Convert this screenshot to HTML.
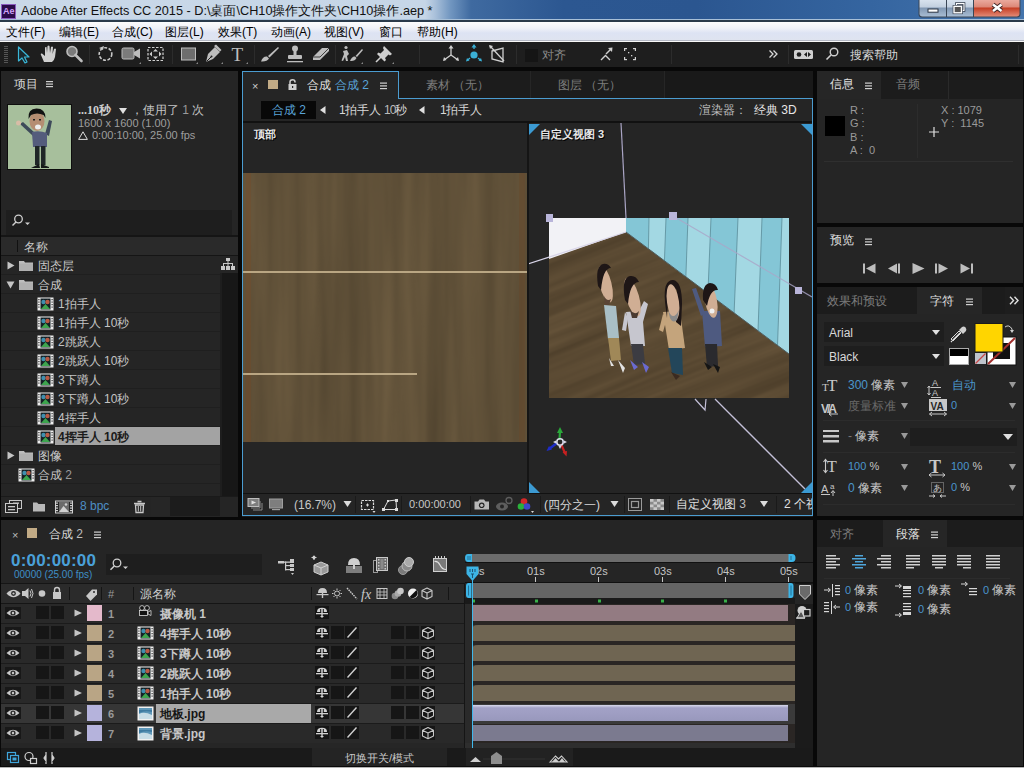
<!DOCTYPE html>
<html><head><meta charset="utf-8">
<style>
*{box-sizing:border-box}
html,body{margin:0;padding:0;width:1024px;height:768px;overflow:hidden;background:#080808;font-family:"Liberation Sans",sans-serif;font-size:12px;color:#c8c8c8}
.a{position:absolute}
.t{position:absolute;white-space:nowrap;line-height:1}
#title{left:0;top:0;width:1024px;height:22px;background:linear-gradient(#00000000 19px,#a8c0d8 19px,#a8c0d8 20px,#2a3a4a 20px),linear-gradient(90deg,#c9d8e8 0%,#c6d6e7 41.5%,#a9c0da 42.5%,#7196c0 44%,#3f6aa0 46%,#2c5791 55%,#2b5690 68%,#3565a0 85%,#4474ac 100%)}
#menu{left:0;top:22px;width:1024px;height:20px;background:linear-gradient(#fcfcfc,#f0f2f8 30%,#dde3f3 55%,#dfe4f0 90%,#b4b8c4 90%,#b4b8c4 95%,#f8f8f8 95%)}
#tool{left:0;top:42px;width:1024px;height:25px;background:#1e1e1e}
.panel{position:absolute;background:#252525}
</style></head><body>
<!-- title bar -->
<div id="title" class="a">
  <div class="a" style="left:1px;top:4px;width:15px;height:15px;background:#2a0c4a;border:1px solid #8a5cc0"></div>
  <div class="t" style="left:3px;top:7px;font-size:9px;color:#d0a4fa;font-weight:bold">Ae</div>
  <div class="t" style="left:21px;top:5px;font-size:12.7px;color:#111">Adobe After Effects CC 2015 - D:\桌面\CH10操作文件夹\CH10操作.aep *</div>
<svg class="a" style="left:917px;top:0" width="105" height="19" viewBox="917 0 105 19">
 <defs>
  <linearGradient id="bg1" x1="0" y1="0" x2="0" y2="1"><stop offset="0" stop-color="#d8e2ee"/><stop offset="0.44" stop-color="#c2cfdf"/><stop offset="0.47" stop-color="#8096b2"/><stop offset="1" stop-color="#a9bdd3"/></linearGradient>
  <linearGradient id="bg2" x1="0" y1="0" x2="0" y2="1"><stop offset="0" stop-color="#eaa99d"/><stop offset="0.44" stop-color="#dc8676"/><stop offset="0.47" stop-color="#c43c22"/><stop offset="1" stop-color="#e28a76"/></linearGradient>
 </defs>
 <path d="M918.5 0 L918.5 14 Q918.5 17.5 922 17.5 L1017 17.5 Q1020.5 17.5 1020.5 14 L1020.5 0 Z" fill="#3a4656"/>
 <path d="M919.5 0 L919.5 13.5 Q919.5 16.5 922.5 16.5 L946 16.5 L946 0Z" fill="url(#bg1)"/>
 <rect x="947" y="0" width="26" height="16.5" fill="url(#bg1)"/>
 <path d="M974 0 L974 16.5 L1016.5 16.5 Q1019.5 16.5 1019.5 13.5 L1019.5 0Z" fill="url(#bg2)"/>
 <rect x="928" y="9" width="10" height="3.2" fill="#fff" stroke="#2a3444" stroke-width="1"/>
 <rect x="956.5" y="3.5" width="7.5" height="7" fill="none" stroke="#2a3444" stroke-width="2.6"/>
 <rect x="956.5" y="3.5" width="7.5" height="7" fill="none" stroke="#fff" stroke-width="1.2"/>
 <rect x="954" y="6.3" width="7.5" height="6.5" fill="#c2cfdf" stroke="#2a3444" stroke-width="2.6"/>
 <rect x="954" y="6.3" width="7.5" height="6.5" fill="#555" stroke="#fff" stroke-width="1.4"/>
 <path d="M993 4.5 L1001.5 11 M1001.5 4.5 L993 11" stroke="#3a2222" stroke-width="4.4"/>
 <path d="M993 4.5 L1001.5 11 M1001.5 4.5 L993 11" stroke="#fff" stroke-width="2.6"/>
</svg>
</div>
<!-- menu bar -->
<div id="menu" class="a">
  <div class="t" style="left:6px;top:4px;color:#000">文件(F)</div>
  <div class="t" style="left:59px;top:4px;color:#000">编辑(E)</div>
  <div class="t" style="left:112px;top:4px;color:#000">合成(C)</div>
  <div class="t" style="left:165px;top:4px;color:#000">图层(L)</div>
  <div class="t" style="left:218px;top:4px;color:#000">效果(T)</div>
  <div class="t" style="left:271px;top:4px;color:#000">动画(A)</div>
  <div class="t" style="left:324px;top:4px;color:#000">视图(V)</div>
  <div class="t" style="left:379px;top:4px;color:#000">窗口</div>
  <div class="t" style="left:417px;top:4px;color:#000">帮助(H)</div>
</div>
<!-- toolbar -->
<div id="tool" class="a">
<svg class="a" style="left:0;top:0" width="1024" height="25" viewBox="0 42 1024 25">
 <g fill="#555"><rect x="4" y="46" width="4" height="1"/><rect x="4" y="48" width="4" height="1"/><rect x="4" y="50" width="4" height="1"/><rect x="4" y="52" width="4" height="1"/><rect x="4" y="54" width="4" height="1"/><rect x="4" y="56" width="4" height="1"/><rect x="4" y="58" width="4" height="1"/><rect x="4" y="60" width="4" height="1"/><rect x="4" y="62" width="4" height="1"/></g>
 <!-- selection arrow -->
 <path d="M18.5 47 L18.5 61 L22 58 L25 63 L27 62 L24.5 57 L29 57 Z" fill="#1a2a30" stroke="#3ab7d8" stroke-width="1.2" stroke-linejoin="round"/>
 <!-- hand -->
 <path d="M44 62 L41 55 Q40 53 42 53.5 L45 56 L45 48 Q45 46.5 46.5 47 L47 53 L47.5 46 Q48.5 45 49.5 46 L50 53 L51 47 Q52 46 53 47 L52.5 54 L54 49 Q55 48 56 49 L55 57 Q54 61 52 62 Z" fill="#cfcfcf"/>
 <!-- zoom -->
 <circle cx="72" cy="51.5" r="5" fill="#7a7a7a" stroke="#bdbdbd" stroke-width="1.6"/>
 <path d="M75.5 55 L81.5 61" stroke="#bdbdbd" stroke-width="2.6" stroke-linecap="round"/>
 <rect x="89" y="45" width="1" height="19" fill="#2c2c2c"/>
 <!-- rotate -->
 <circle cx="105.5" cy="54" r="6.3" fill="none" stroke="#c8c8c8" stroke-width="1.6" stroke-dasharray="3 1.6"/>
 <path d="M99 48 L104 46 L103 50 Z" fill="#c8c8c8"/>
 <!-- camera -->
 <rect x="122" y="48" width="12" height="11" rx="1.5" fill="#7b7b7b" stroke="#bdbdbd" stroke-width="1"/>
 <path d="M134 52 L140 48.5 L140 58.5 L134 55 Z" fill="#bdbdbd"/>
 <path d="M139 64 L141 62 L141 64 Z" fill="#888"/>
 <!-- pan behind -->
 <rect x="148" y="47.5" width="15" height="13" fill="none" stroke="#d0d0d0" stroke-width="1.2" stroke-dasharray="2.5 1.5"/>
 <path d="M155.5 49 L158 51.5 L153 51.5 Z M155.5 59 L158 56.5 L153 56.5 Z M149.5 54 L152 51.5 L152 56.5 Z M161.5 54 L159 51.5 L159 56.5Z" fill="#d0d0d0"/>
 <rect x="172" y="45" width="1" height="19" fill="#2c2c2c"/>
 <!-- rectangle -->
 <rect x="181.5" y="48" width="14" height="12" fill="#6e6e6e" stroke="#bdbdbd" stroke-width="1"/>
 <path d="M196 64 L198 62 L198 64 Z" fill="#888"/>
 <!-- pen -->
 <path d="M206 62 L208 54 L215 47 L220 52 L213 59 Z" fill="#bdbdbd"/>
 <path d="M214 46 L216 44.5 L221.5 50 L220 51.5 Z" fill="#bdbdbd"/>
 <path d="M206.5 61.5 L211 57" stroke="#1e1e1e" stroke-width="1"/>
 <circle cx="211.5" cy="56.5" r="1" fill="#1e1e1e"/>
 <path d="M221 64 L223 62 L223 64 Z" fill="#888"/>
 <!-- T -->
 <text x="231.5" y="61" font-family="Liberation Serif" font-size="19" fill="#bdbdbd">T</text>
 <path d="M246 64 L248 62 L248 64 Z" fill="#888"/>
 <rect x="254" y="45" width="1" height="19" fill="#2c2c2c"/>
 <!-- brush -->
 <path d="M261 61.5 Q263 56 267 56.5 L269 58.5 Q267 62 261 61.5 Z" fill="#bdbdbd"/>
 <path d="M268 56 L278 47 L279 48 L269.5 57.5 Z" fill="#bdbdbd"/>
 <!-- stamp -->
 <circle cx="295" cy="48.5" r="3" fill="#bdbdbd"/>
 <rect x="293.5" y="50" width="3" height="5" fill="#bdbdbd"/>
 <rect x="288" y="55" width="14" height="4" rx="1" fill="#bdbdbd"/>
 <rect x="287" y="61" width="16" height="1.3" fill="#bdbdbd"/>
 <!-- eraser -->
 <path d="M313 57 L322 48 L329 48 L329 51 L320 60 L313 60 Z" fill="#bdbdbd"/>
 <path d="M313 57 L320 57 L329 48" stroke="#1e1e1e" stroke-width="0.8" fill="none"/>
 <rect x="335" y="45" width="1" height="19" fill="#2c2c2c"/>
 <!-- roto brush -->
 <circle cx="346" cy="47.5" r="1.6" fill="#bdbdbd"/>
 <path d="M343 51 L347 50 L349 54 L347 56 L348 61 L346 61 L345 57 L343 61 L341.5 60.5 L344 54 Z" fill="#bdbdbd"/>
 <path d="M350 61 Q352 56 355 56.5 L356.5 58 Q355 61.5 350 61 Z" fill="#bdbdbd"/>
 <path d="M355.5 56 L362 49 L363 50 L357 57 Z" fill="#bdbdbd"/>
 <path d="M361 64 L363 62 L363 64 Z" fill="#888"/>
 <!-- pin -->
 <path d="M384 46 L392 54 L390 55.5 L388.5 54.5 L385 58 L386 60 L384.5 61.5 L377 54 L378.5 52.5 L380.5 53.5 L384 50 L383 48 Z" fill="#cfcfcf"/>
 <path d="M381 57 L376 62" stroke="#cfcfcf" stroke-width="1.6"/>
 <path d="M392 64 L394 62 L394 64 Z" fill="#888"/>
 <rect x="419" y="45" width="1" height="19" fill="#2c2c2c"/>
 <!-- local axis -->
 <g stroke="#d0d0d0" stroke-width="1.3" fill="none"><path d="M451 55 L451 47"/><path d="M451 55 L444 60"/><path d="M451 55 L458 60"/></g>
 <path d="M451 45 L453.5 48.5 L448.5 48.5 Z M443 61 L444 57 L446.5 60 Z M459 61 L455.5 60 L458 57 Z" fill="#d0d0d0"/>
 <!-- world axis cyan -->
 <g stroke="#3ab0d6" stroke-width="1.3" fill="none"><path d="M474 49 L474 45.5"/><path d="M470 58 L467 60.5"/><path d="M478 58 L481 60.5"/></g>
 <circle cx="474" cy="55" r="3.6" fill="#3ab0d6"/>
 <path d="M474 44 L476.5 47.5 L471.5 47.5 Z M466 61.5 L467 58 L469.5 60.5 Z M482 61.5 L478.5 60.5 L481 58 Z" fill="#3ab0d6"/>
 <!-- view axis -->
 <path d="M492 51 L503 48 L503 62 L492 59 Z" fill="none" stroke="#d0d0d0" stroke-width="1.3"/>
 <path d="M490 46 L504 61" stroke="#d0d0d0" stroke-width="1.3"/>
 <path d="M489 45 L493 46 L490 49 Z" fill="#d0d0d0"/>
 <rect x="516" y="45" width="1" height="19" fill="#2c2c2c"/>
 <!-- checkbox -->
 <rect x="525" y="49" width="13" height="13" fill="#151515"/>
 <!-- snap icon -->
 <path d="M601 60 L605.5 55.5 L610 60" stroke="#d0d0d0" stroke-width="1.4" fill="none"/>
 <path d="M606 54 L611 49" stroke="#d0d0d0" stroke-width="1.4"/>
 <path d="M612.5 47.5 L612 52 L608 48 Z" fill="#d0d0d0"/>
 <!-- frame -->
 <g fill="#d0d0d0"><rect x="624" y="48" width="3" height="1.2"/><rect x="624" y="48" width="1.2" height="3"/><rect x="633" y="48" width="3" height="1.2"/><rect x="634.8" y="48" width="1.2" height="3"/><rect x="624" y="59" width="3" height="1.2"/><rect x="624" y="57" width="1.2" height="3"/><rect x="633" y="59" width="3" height="1.2"/><rect x="634.8" y="57" width="1.2" height="3"/><rect x="628" y="52" width="1.3" height="1.3"/><rect x="631" y="55" width="1.3" height="1.3"/></g>
 <rect x="671" y="45" width="1" height="19" fill="#2c2c2c"/>
 <!-- >> -->
 <path d="M769.5 50.5 L773 54 L769.5 57.5 M773.5 50.5 L777 54 L773.5 57.5" stroke="#d8d8d8" stroke-width="1.3" fill="none"/>
 <rect x="788" y="45" width="1" height="19" fill="#2c2c2c"/>
 <!-- workspace icon -->
 <rect x="794" y="50" width="19" height="9" rx="1.5" fill="#d0d0d0"/>
 <circle cx="799" cy="54.5" r="2.3" fill="#1e1e1e"/>
 <path d="M804 54.5 L807 52 L807 57 Z M811 54.5 L808 52 L808 57 Z" fill="#1e1e1e"/>
 <!-- search -->
 <circle cx="834" cy="52" r="3.8" fill="none" stroke="#d0d0d0" stroke-width="1.4"/>
 <path d="M831 55 L826.5 59.5" stroke="#d0d0d0" stroke-width="1.6"/>
 <rect x="1018" y="45" width="1" height="19" fill="#2c2c2c"/>
</svg>
<div class="t" style="left:542px;top:7px;color:#8a8a8a">对齐</div>
<div class="t" style="left:850px;top:7px;color:#d8d8d8;font-size:12px">搜索帮助</div>
</div>

<!-- project panel -->
<div class="panel" style="left:1px;top:71px;width:237px;height:446px"></div>
<div class="t" style="left:14px;top:78px;color:#d4d4d4">项目</div>
<svg class="a" style="left:46px;top:80px" width="8" height="8"><g fill="#cfcfcf"><rect x="0" y="1" width="7" height="1.2"/><rect x="0" y="3.5" width="7" height="1.2"/><rect x="0" y="6" width="7" height="1.2"/></g></svg>
<!-- thumbnail -->
<div class="a" style="left:7px;top:104px;width:65px;height:66px;background:#0e0e0e"></div>
<svg class="a" style="left:8px;top:105px" width="63" height="64" viewBox="0 0 63 64">
 <rect width="63" height="64" fill="#a7bf9c"/>
 <path d="M12 19 L15 17 L27 28 L25 31 Z" fill="#3e4a5a"/>
 <circle cx="10.5" cy="18" r="2.5" fill="#d8bca6"/>
 <path d="M37 29 L41 15 L44 16 L41 31 Z" fill="#3e4a5a"/>
 <path d="M24 27 Q31 25 39 28 L39 42 L25 42 Z" fill="#545c7c"/>
 <rect x="27" y="41" width="4.5" height="19" fill="#1f2627"/><rect x="33" y="41" width="4.5" height="19" fill="#1f2627"/>
 <path d="M23 63 L31 59 L32 63Z M33 59 L41 62 L41 63 L33 63Z" fill="#141818"/>
 <ellipse cx="29" cy="16" rx="7.5" ry="10" fill="#b58d72"/>
 <path d="M20.5 14 Q19.5 3.5 28.5 3.5 Q37.5 3.5 37.5 13 L35.5 10 Q29 7 23 10 Z" fill="#121212"/>
 <ellipse cx="30" cy="22" rx="3" ry="2.5" fill="#eeeeee"/>
 <rect x="25" y="14" width="2" height="1.5" fill="#222"/><rect x="31" y="14" width="2" height="1.5" fill="#222"/>
</svg>
<div class="t" style="left:78px;top:104px;color:#cfcfcf;font-weight:bold;font-family:'Liberation Serif',serif;font-size:12px">...10秒</div>
<svg class="a" style="left:119px;top:108px" width="8" height="6"><path d="M0 0 L8 0 L4 6Z" fill="#e0e0e0"/></svg>
<div class="t" style="left:131px;top:104px;color:#c4c4c4">，使用了 <span style="color:#9a9a9a">1</span> 次</div>
<div class="t" style="left:78px;top:118px;color:#9e9e9e;font-size:11px">1600 x 1600 (1.00)</div>
<svg class="a" style="left:78px;top:131px" width="10" height="9"><path d="M5 0.8 L9.4 8.4 L0.6 8.4Z" fill="none" stroke="#dcdcdc" stroke-width="1"/></svg>
<div class="t" style="left:92px;top:130px;color:#9e9e9e;font-size:11px">0:00:10:00, 25.00 fps</div>
<!-- search -->
<div class="a" style="left:6px;top:210px;width:226px;height:25px;background:#1e1e1e"></div>
<svg class="a" style="left:11px;top:213px" width="22" height="16"><circle cx="7.5" cy="6" r="3.8" fill="none" stroke="#d0d0d0" stroke-width="1.3"/><path d="M5 9 L1.5 12.5" stroke="#d0d0d0" stroke-width="1.5"/><path d="M14 9.5 L19 9.5 L16.5 12 Z" fill="#d0d0d0"/></svg>
<div class="a" style="left:1px;top:235px;width:237px;height:2px;background:#151515"></div>
<!-- header -->
<div class="a" style="left:1px;top:237px;width:237px;height:18px;background:#2a2a2a"></div>
<div class="a" style="left:17px;top:240px;width:1px;height:12px;background:#111"></div>
<div class="t" style="left:24px;top:241px;color:#c8c8c8">名称</div>
<div class="a" style="left:1px;top:255px;width:237px;height:1px;background:#151515"></div>
<div class="a" style="left:1px;top:256px;width:219px;height:19px;border-bottom:1px solid #1f1f1f"></div>
<svg class="a" style="left:7px;top:261px" width="8" height="9"><path d="M0.5 0.5 L7.5 4.5 L0.5 8.5Z" fill="#c4c4c4"/></svg>
<svg class="a" style="left:19px;top:260px" width="14" height="11" viewBox="0 0 14 11"><path d="M0 1 L5 1 L6 2.5 L14 2.5 L14 11 L0 11 Z" fill="#bdbdbd"/><path d="M0 3.5 L14 3.5 L14 11 L0 11Z" fill="#b0b0b0"/></svg>
<div class="t" style="left:38px;top:260px;color:#cbcbcb">固态层</div>
<div class="a" style="left:1px;top:275px;width:219px;height:19px;border-bottom:1px solid #1f1f1f"></div>
<svg class="a" style="left:6px;top:281px" width="9" height="8"><path d="M0.5 0.5 L8.5 0.5 L4.5 7.5Z" fill="#c4c4c4"/></svg>
<svg class="a" style="left:19px;top:279px" width="14" height="11" viewBox="0 0 14 11"><path d="M0 1 L5 1 L6 2.5 L14 2.5 L14 11 L0 11 Z" fill="#bdbdbd"/><path d="M0 3.5 L14 3.5 L14 11 L0 11Z" fill="#b0b0b0"/></svg>
<div class="t" style="left:38px;top:279px;color:#cbcbcb">合成</div>
<div class="a" style="left:1px;top:294px;width:219px;height:19px;border-bottom:1px solid #1f1f1f"></div>
<svg class="a" style="left:37px;top:297px" width="17" height="14" viewBox="0 0 17 14"><rect x="0.5" y="0.5" width="16" height="13" fill="#eee"/><rect x="3.5" y="1.5" width="10" height="11" fill="#152025"/><circle cx="6.5" cy="5" r="2.2" fill="#3f8fae"/><circle cx="10.5" cy="5" r="2.2" fill="#b85a44"/><path d="M4 12 L8.5 7 L13 12 Z" fill="#3da54e"/><g fill="#333"><rect x="1.3" y="2" width="1.2" height="1.2"/><rect x="1.3" y="4.5" width="1.2" height="1.2"/><rect x="1.3" y="7" width="1.2" height="1.2"/><rect x="1.3" y="9.5" width="1.2" height="1.2"/><rect x="14.5" y="2" width="1.2" height="1.2"/><rect x="14.5" y="4.5" width="1.2" height="1.2"/><rect x="14.5" y="7" width="1.2" height="1.2"/><rect x="14.5" y="9.5" width="1.2" height="1.2"/></g></svg>
<div class="t" style="left:58px;top:298px;color:#c4c4c4">1拍手人</div>
<div class="a" style="left:1px;top:313px;width:219px;height:19px;border-bottom:1px solid #1f1f1f"></div>
<svg class="a" style="left:37px;top:316px" width="17" height="14" viewBox="0 0 17 14"><rect x="0.5" y="0.5" width="16" height="13" fill="#eee"/><rect x="3.5" y="1.5" width="10" height="11" fill="#152025"/><circle cx="6.5" cy="5" r="2.2" fill="#3f8fae"/><circle cx="10.5" cy="5" r="2.2" fill="#b85a44"/><path d="M4 12 L8.5 7 L13 12 Z" fill="#3da54e"/><g fill="#333"><rect x="1.3" y="2" width="1.2" height="1.2"/><rect x="1.3" y="4.5" width="1.2" height="1.2"/><rect x="1.3" y="7" width="1.2" height="1.2"/><rect x="1.3" y="9.5" width="1.2" height="1.2"/><rect x="14.5" y="2" width="1.2" height="1.2"/><rect x="14.5" y="4.5" width="1.2" height="1.2"/><rect x="14.5" y="7" width="1.2" height="1.2"/><rect x="14.5" y="9.5" width="1.2" height="1.2"/></g></svg>
<div class="t" style="left:58px;top:317px;color:#c4c4c4">1拍手人 10秒</div>
<div class="a" style="left:1px;top:332px;width:219px;height:19px;border-bottom:1px solid #1f1f1f"></div>
<svg class="a" style="left:37px;top:335px" width="17" height="14" viewBox="0 0 17 14"><rect x="0.5" y="0.5" width="16" height="13" fill="#eee"/><rect x="3.5" y="1.5" width="10" height="11" fill="#152025"/><circle cx="6.5" cy="5" r="2.2" fill="#3f8fae"/><circle cx="10.5" cy="5" r="2.2" fill="#b85a44"/><path d="M4 12 L8.5 7 L13 12 Z" fill="#3da54e"/><g fill="#333"><rect x="1.3" y="2" width="1.2" height="1.2"/><rect x="1.3" y="4.5" width="1.2" height="1.2"/><rect x="1.3" y="7" width="1.2" height="1.2"/><rect x="1.3" y="9.5" width="1.2" height="1.2"/><rect x="14.5" y="2" width="1.2" height="1.2"/><rect x="14.5" y="4.5" width="1.2" height="1.2"/><rect x="14.5" y="7" width="1.2" height="1.2"/><rect x="14.5" y="9.5" width="1.2" height="1.2"/></g></svg>
<div class="t" style="left:58px;top:336px;color:#c4c4c4">2跳跃人</div>
<div class="a" style="left:1px;top:351px;width:219px;height:19px;border-bottom:1px solid #1f1f1f"></div>
<svg class="a" style="left:37px;top:354px" width="17" height="14" viewBox="0 0 17 14"><rect x="0.5" y="0.5" width="16" height="13" fill="#eee"/><rect x="3.5" y="1.5" width="10" height="11" fill="#152025"/><circle cx="6.5" cy="5" r="2.2" fill="#3f8fae"/><circle cx="10.5" cy="5" r="2.2" fill="#b85a44"/><path d="M4 12 L8.5 7 L13 12 Z" fill="#3da54e"/><g fill="#333"><rect x="1.3" y="2" width="1.2" height="1.2"/><rect x="1.3" y="4.5" width="1.2" height="1.2"/><rect x="1.3" y="7" width="1.2" height="1.2"/><rect x="1.3" y="9.5" width="1.2" height="1.2"/><rect x="14.5" y="2" width="1.2" height="1.2"/><rect x="14.5" y="4.5" width="1.2" height="1.2"/><rect x="14.5" y="7" width="1.2" height="1.2"/><rect x="14.5" y="9.5" width="1.2" height="1.2"/></g></svg>
<div class="t" style="left:58px;top:355px;color:#c4c4c4">2跳跃人 10秒</div>
<div class="a" style="left:1px;top:370px;width:219px;height:19px;border-bottom:1px solid #1f1f1f"></div>
<svg class="a" style="left:37px;top:373px" width="17" height="14" viewBox="0 0 17 14"><rect x="0.5" y="0.5" width="16" height="13" fill="#eee"/><rect x="3.5" y="1.5" width="10" height="11" fill="#152025"/><circle cx="6.5" cy="5" r="2.2" fill="#3f8fae"/><circle cx="10.5" cy="5" r="2.2" fill="#b85a44"/><path d="M4 12 L8.5 7 L13 12 Z" fill="#3da54e"/><g fill="#333"><rect x="1.3" y="2" width="1.2" height="1.2"/><rect x="1.3" y="4.5" width="1.2" height="1.2"/><rect x="1.3" y="7" width="1.2" height="1.2"/><rect x="1.3" y="9.5" width="1.2" height="1.2"/><rect x="14.5" y="2" width="1.2" height="1.2"/><rect x="14.5" y="4.5" width="1.2" height="1.2"/><rect x="14.5" y="7" width="1.2" height="1.2"/><rect x="14.5" y="9.5" width="1.2" height="1.2"/></g></svg>
<div class="t" style="left:58px;top:374px;color:#c4c4c4">3下蹲人</div>
<div class="a" style="left:1px;top:389px;width:219px;height:19px;border-bottom:1px solid #1f1f1f"></div>
<svg class="a" style="left:37px;top:392px" width="17" height="14" viewBox="0 0 17 14"><rect x="0.5" y="0.5" width="16" height="13" fill="#eee"/><rect x="3.5" y="1.5" width="10" height="11" fill="#152025"/><circle cx="6.5" cy="5" r="2.2" fill="#3f8fae"/><circle cx="10.5" cy="5" r="2.2" fill="#b85a44"/><path d="M4 12 L8.5 7 L13 12 Z" fill="#3da54e"/><g fill="#333"><rect x="1.3" y="2" width="1.2" height="1.2"/><rect x="1.3" y="4.5" width="1.2" height="1.2"/><rect x="1.3" y="7" width="1.2" height="1.2"/><rect x="1.3" y="9.5" width="1.2" height="1.2"/><rect x="14.5" y="2" width="1.2" height="1.2"/><rect x="14.5" y="4.5" width="1.2" height="1.2"/><rect x="14.5" y="7" width="1.2" height="1.2"/><rect x="14.5" y="9.5" width="1.2" height="1.2"/></g></svg>
<div class="t" style="left:58px;top:393px;color:#c4c4c4">3下蹲人 10秒</div>
<div class="a" style="left:1px;top:408px;width:219px;height:19px;border-bottom:1px solid #1f1f1f"></div>
<svg class="a" style="left:37px;top:411px" width="17" height="14" viewBox="0 0 17 14"><rect x="0.5" y="0.5" width="16" height="13" fill="#eee"/><rect x="3.5" y="1.5" width="10" height="11" fill="#152025"/><circle cx="6.5" cy="5" r="2.2" fill="#3f8fae"/><circle cx="10.5" cy="5" r="2.2" fill="#b85a44"/><path d="M4 12 L8.5 7 L13 12 Z" fill="#3da54e"/><g fill="#333"><rect x="1.3" y="2" width="1.2" height="1.2"/><rect x="1.3" y="4.5" width="1.2" height="1.2"/><rect x="1.3" y="7" width="1.2" height="1.2"/><rect x="1.3" y="9.5" width="1.2" height="1.2"/><rect x="14.5" y="2" width="1.2" height="1.2"/><rect x="14.5" y="4.5" width="1.2" height="1.2"/><rect x="14.5" y="7" width="1.2" height="1.2"/><rect x="14.5" y="9.5" width="1.2" height="1.2"/></g></svg>
<div class="t" style="left:58px;top:412px;color:#c4c4c4">4挥手人</div>
<div class="a" style="left:1px;top:427px;width:219px;height:19px;border-bottom:1px solid #1f1f1f"></div>
<svg class="a" style="left:37px;top:430px" width="17" height="14" viewBox="0 0 17 14"><rect x="0.5" y="0.5" width="16" height="13" fill="#eee"/><rect x="3.5" y="1.5" width="10" height="11" fill="#152025"/><circle cx="6.5" cy="5" r="2.2" fill="#3f8fae"/><circle cx="10.5" cy="5" r="2.2" fill="#b85a44"/><path d="M4 12 L8.5 7 L13 12 Z" fill="#3da54e"/><g fill="#333"><rect x="1.3" y="2" width="1.2" height="1.2"/><rect x="1.3" y="4.5" width="1.2" height="1.2"/><rect x="1.3" y="7" width="1.2" height="1.2"/><rect x="1.3" y="9.5" width="1.2" height="1.2"/><rect x="14.5" y="2" width="1.2" height="1.2"/><rect x="14.5" y="4.5" width="1.2" height="1.2"/><rect x="14.5" y="7" width="1.2" height="1.2"/><rect x="14.5" y="9.5" width="1.2" height="1.2"/></g></svg>
<div class="a" style="left:55px;top:427px;width:165px;height:18px;background:#a3a3a3"></div>
<div class="t" style="left:58px;top:431px;color:#1a1a1a;font-weight:bold">4挥手人 10秒</div>
<div class="a" style="left:1px;top:446px;width:219px;height:19px;border-bottom:1px solid #1f1f1f"></div>
<svg class="a" style="left:7px;top:451px" width="8" height="9"><path d="M0.5 0.5 L7.5 4.5 L0.5 8.5Z" fill="#c4c4c4"/></svg>
<svg class="a" style="left:19px;top:450px" width="14" height="11" viewBox="0 0 14 11"><path d="M0 1 L5 1 L6 2.5 L14 2.5 L14 11 L0 11 Z" fill="#bdbdbd"/><path d="M0 3.5 L14 3.5 L14 11 L0 11Z" fill="#b0b0b0"/></svg>
<div class="t" style="left:38px;top:450px;color:#cbcbcb">图像</div>
<div class="a" style="left:1px;top:465px;width:219px;height:19px;border-bottom:1px solid #1f1f1f"></div>
<svg class="a" style="left:18px;top:468px" width="17" height="14" viewBox="0 0 17 14"><rect x="0.5" y="0.5" width="16" height="13" fill="#eee"/><rect x="3.5" y="1.5" width="10" height="11" fill="#152025"/><circle cx="6.5" cy="5" r="2.2" fill="#3f8fae"/><circle cx="10.5" cy="5" r="2.2" fill="#b85a44"/><path d="M4 12 L8.5 7 L13 12 Z" fill="#3da54e"/><g fill="#333"><rect x="1.3" y="2" width="1.2" height="1.2"/><rect x="1.3" y="4.5" width="1.2" height="1.2"/><rect x="1.3" y="7" width="1.2" height="1.2"/><rect x="1.3" y="9.5" width="1.2" height="1.2"/><rect x="14.5" y="2" width="1.2" height="1.2"/><rect x="14.5" y="4.5" width="1.2" height="1.2"/><rect x="14.5" y="7" width="1.2" height="1.2"/><rect x="14.5" y="9.5" width="1.2" height="1.2"/></g></svg>
<div class="t" style="left:38px;top:469px;color:#c4c4c4">合成 <span style="color:#9a9a9a">2</span></div>
<!-- scrollbar area -->
<div class="a" style="left:220px;top:273px;width:18px;height:224px;background:#171717;border-left:2px solid #1e1e1e"></div>
<svg class="a" style="left:221px;top:258px" width="14" height="13"><g fill="#c8c8c8"><rect x="5" y="0" width="4" height="3"/><rect x="6.5" y="3" width="1" height="3"/><rect x="2" y="5" width="10" height="1"/><rect x="2" y="5" width="1" height="3"/><rect x="11" y="5" width="1" height="3"/><rect x="6.5" y="5" width="1" height="3"/><rect x="0" y="8" width="4" height="4"/><rect x="5" y="8" width="4" height="4"/><rect x="10" y="8" width="4" height="4"/></g></svg>
<!-- bottom bar -->
<div class="a" style="left:1px;top:496px;width:237px;height:21px;background:#252525;border-top:1px solid #1a1a1a"></div>
<svg class="a" style="left:4px;top:498px" width="150" height="16" viewBox="4 498 150 16">
 <rect x="9.5" y="500.5" width="12" height="8" fill="#252525" stroke="#c8c8c8" stroke-width="1"/>
 <rect x="5.5" y="503.5" width="12" height="9" fill="#252525" stroke="#c8c8c8" stroke-width="1"/>
 <rect x="8" y="506" width="7" height="1.3" fill="#c8c8c8"/><rect x="8" y="509" width="7" height="1.3" fill="#c8c8c8"/>
 <rect x="13" y="502.5" width="6" height="1.3" fill="#c8c8c8"/>
 <path d="M33 502.5 L37 502.5 L38.5 504 L45 504 L45 511.5 L33 511.5 Z" fill="#b8b8b8"/>
 <rect x="55.5" y="501" width="17" height="12" fill="#252525" stroke="#d0d0d0" stroke-width="1"/>
 <g fill="#d0d0d0"><rect x="56" y="502.5" width="2" height="1.2"/><rect x="56" y="505" width="2" height="1.2"/><rect x="56" y="507.5" width="2" height="1.2"/><rect x="56" y="510" width="2" height="1.2"/><rect x="70" y="502.5" width="2" height="1.2"/><rect x="70" y="505" width="2" height="1.2"/><rect x="70" y="507.5" width="2" height="1.2"/><rect x="70" y="510" width="2" height="1.2"/></g>
 <rect x="59" y="502" width="10" height="10" fill="#6a6a6a"/>
 <path d="M59 512 L63.5 506 L69 512 Z" fill="#d0d0d0"/>
 <circle cx="66" cy="504.5" r="1.3" fill="#d0d0d0"/>
 <path d="M134 503.5 L145 503.5 M137.5 501.5 L141.5 501.5" stroke="#c8c8c8" stroke-width="1.3"/>
 <path d="M135.5 505 L143.5 505 L143 512.5 L136 512.5 Z" fill="none" stroke="#c8c8c8" stroke-width="1.3"/>
 <path d="M138.3 506 L138.3 511.5 M140.7 506 L140.7 511.5" stroke="#c8c8c8" stroke-width="1"/>
</svg>
<div class="t" style="left:80px;top:500px;color:#4d8ec4">8 bpc</div>
<div class="a" style="left:151px;top:497px;width:69px;height:19px;background:#262626"></div>
<div class="a" style="left:170px;top:497px;width:50px;height:19px;background:#1c1c1c"></div>

<!-- comp panel -->
<div class="a" style="left:242px;top:71px;width:571px;height:446px;background:#1c1c1c"></div>
<!-- active tab -->
<div class="a" style="left:242px;top:71px;width:157px;height:28px;background:#252525;border:1px solid #4b9cd0;border-bottom:none"></div>
<div class="t" style="left:252px;top:81px;color:#cfcfcf;font-size:11px">×</div>
<div class="a" style="left:268px;top:80px;width:10px;height:9px;background:#c2ab86"></div>
<svg class="a" style="left:288px;top:79px" width="9" height="11"><path d="M2 5 L2 3 Q2 0.8 4.5 0.8 Q7 0.8 7 3 L7 3.5" fill="none" stroke="#cfcfcf" stroke-width="1.5"/><rect x="0.5" y="5" width="8" height="6" fill="#cfcfcf"/><rect x="4" y="7" width="1.2" height="2" fill="#252525"/></svg>
<div class="t" style="left:307px;top:79px;color:#e0e0e0">合成</div>
<div class="t" style="left:335px;top:79px;color:#5aa3d8">合成 2</div>
<svg class="a" style="left:380px;top:82px" width="8" height="8"><g fill="#d0d0d0"><rect x="0" y="0.5" width="7" height="1.2"/><rect x="0" y="3.3" width="7" height="1.2"/><rect x="0" y="6" width="7" height="1.2"/></g></svg>
<div class="t" style="left:426px;top:79px;color:#7d7d7d">素材 （无）</div>
<div class="t" style="left:558px;top:79px;color:#7d7d7d">图层 （无）</div>
<div class="a" style="left:530px;top:71px;width:1px;height:27px;background:#262626"></div>
<div class="a" style="left:664px;top:71px;width:1px;height:27px;background:#262626"></div>
<div class="a" style="left:665px;top:71px;width:148px;height:27px;background:#191919"></div>
<div class="a" style="left:398px;top:98px;width:415px;height:1px;background:#4b9cd0"></div>
<!-- viewer frame -->
<div class="a" style="left:242px;top:99px;width:571px;height:417px;background:#252525;border:1px solid #4b9cd0;border-top:none"></div>
<!-- breadcrumb -->
<div class="a" style="left:261px;top:101px;width:55px;height:18px;background:#080808"></div>
<div class="t" style="left:272px;top:104px;color:#5aa3d8">合成 <span style="color:#5aa3d8">2</span></div>
<svg class="a" style="left:320px;top:106px" width="6" height="8"><path d="M5.5 0 L5.5 8 L0 4Z" fill="#e0e0e0"/></svg>
<div class="t" style="left:339px;top:104px;color:#d8d8d8"><span style="letter-spacing:-1px">1</span>拍手人 <span style="color:#bdbdbd;letter-spacing:-1px">10</span>秒</div>
<svg class="a" style="left:419px;top:106px" width="6" height="8"><path d="M5.5 0 L5.5 8 L0 4Z" fill="#e0e0e0"/></svg>
<div class="t" style="left:440px;top:104px;color:#d8d8d8"><span style="letter-spacing:-1px">1</span>拍手人</div>
<div class="t" style="left:699px;top:104px;color:#bdbdbd">渲染器：</div>
<div class="t" style="left:754px;top:104px;color:#e8e8e8">经典 3D</div>
<div class="a" style="left:243px;top:121px;width:569px;height:2px;background:#111"></div>
<!-- left view -->
<div class="a" style="left:243px;top:123px;width:284px;height:370px;background:#252525"></div>
<svg class="a" style="left:243px;top:173px" width="284" height="269">
 <defs><filter id="wf" x="0" y="0" width="100%" height="100%" color-interpolation-filters="sRGB"><feTurbulence type="fractalNoise" baseFrequency="0.05 0.003" numOctaves="3" seed="7"/><feColorMatrix values="0.13 0 0 0 0.31  0.11 0 0 0 0.26  0.08 0 0 0 0.18  0 0 0 0 1"/></filter></defs>
 <rect width="284" height="269" filter="url(#wf)"/>
 <rect x="3" width="5" height="269" fill="#7a4a26" opacity="0.35"/>
 <rect x="276" width="6" height="269" fill="#6e4424" opacity="0.3"/>
</svg>
<div class="a" style="left:243px;top:271px;width:284px;height:2px;background:#b9a683"></div>
<div class="a" style="left:243px;top:373px;width:174px;height:2px;background:#b9a683"></div>
<div class="t" style="left:254px;top:129px;color:#e8e8e8;font-weight:bold;font-size:11px;text-shadow:1px 1px 0 #000">顶部</div>
<div class="a" style="left:527px;top:123px;width:2px;height:370px;background:#151515"></div>
<!-- right view -->
<div class="a" style="left:529px;top:123px;width:283px;height:370px;background:#252525;overflow:hidden">
<svg width="283" height="370" viewBox="529 123 283 370" style="position:absolute;left:0;top:0">
 <defs>
  <linearGradient id="fl" x1="0" y1="0" x2="1" y2="1"><stop offset="0" stop-color="#5a4833"/><stop offset="0.5" stop-color="#66543c"/><stop offset="1" stop-color="#5c4b36"/></linearGradient>
  <pattern id="wd" width="14" height="6" patternUnits="userSpaceOnUse" patternTransform="rotate(-28)"><rect width="14" height="6" fill="none"/><rect y="0" width="14" height="1" fill="rgba(0,0,0,0.12)"/><rect y="3" width="14" height="1" fill="rgba(255,230,190,0.05)"/></pattern>
 </defs>
 <path d="M621 123 L626 218" stroke="#a9a4c4" stroke-width="1.2"/>
 <clipPath id="fc"><rect x="549" y="218" width="240" height="180"/></clipPath>
 <filter id="ff" x="0" y="0" width="100%" height="100%" color-interpolation-filters="sRGB"><feTurbulence type="fractalNoise" baseFrequency="0.003 0.09" numOctaves="3" seed="3"/><feColorMatrix values="0.14 0 0 0 0.28  0.12 0 0 0 0.225  0.09 0 0 0 0.15  0 0 0 0 1"/></filter>
 <g clip-path="url(#fc)"><g transform="rotate(-22 669 308)"><rect x="480" y="150" width="380" height="320" filter="url(#ff)"/></g></g>
 <path d="M549 218 L626 218 L626 232 L549 259 Z" fill="#f2f2f6"/>
 <path d="M626 218 L789 218 L789 354 L626 232 Z" fill="#a3d8e3"/>
 <clipPath id="wc"><path d="M626 218 L789 218 L789 354 L626 232 Z"/></clipPath>
 <g fill="#84c6d6" clip-path="url(#wc)">
  <path d="M626 218 L649 218 L648 270 L626 270Z"/>
  <path d="M666 218 L688 218 L685 300 L663 300Z"/>
  <path d="M711 218 L738 218 L733 340 L706 340Z"/>
  <path d="M762 218 L782 218 L777 360 L757 360Z"/>
 </g>
 <g stroke="#5a8c98" stroke-width="0.8" fill="none" clip-path="url(#wc)">
  <path d="M649 218 L648 270"/><path d="M666 218 L663 300"/><path d="M688 218 L685 300"/><path d="M711 218 L706 340"/><path d="M738 218 L733 340"/><path d="M762 218 L757 360"/><path d="M782 218 L777 360"/>
 </g>
 <path d="M528 264 L626 232" stroke="#d8d4e8" stroke-width="1.3"/>
 <path d="M626 232 L789 354" stroke="#4e5c5e" stroke-width="1"/>
 <path d="M673 216 L812 297" stroke="#aaa6c8" stroke-width="1.2" opacity="0.8"/>
 <rect x="546" y="214" width="7" height="8" fill="#b9b5da"/>
 <rect x="669" y="212" width="8" height="8" fill="#b9b5da"/>
 <rect x="795" y="287" width="7" height="7" fill="#b9b5da"/>
 <path d="M715 399 L805 489" stroke="#c4c0d8" stroke-width="1.3"/>
 <path d="M695 399 L705 410 L706 399" stroke="#c4c0d8" stroke-width="1.2" fill="none"/>
 <!-- people -->
 <g>
  <path d="M604 305 L616 306 L619 338 L608 339 Z" fill="#a9bfc6"/>
  <path d="M608 338 L619 338 L621 360 L611 361 Z" fill="#a08858"/>
  <path d="M609 358 L611 366 L614 366 Z M618 360 L623 373 L625 368Z" fill="#e2e2e2"/>
  <ellipse cx="605.5" cy="284" rx="6" ry="19" fill="#d0ae94" transform="rotate(-14 605.5 284)"/>
  <path d="M598 286 Q595 266 603 264 Q608 263 611 268 Q603 268 601 290 Z" fill="#1e1616"/>
  <path d="M604 296 Q607 302 611 299 L609 305 L605 305Z" fill="#5a4536"/>
  <path d="M626 312 L639 311 L644 301 L648 304 L643 322 L645 346 L631 346 Z" fill="#c6c6ce"/>
  <path d="M625 312 L622 330 L626 331 L628 318 Z" fill="#c6c6ce"/>
  <path d="M631 344 L643 344 L645 364 L634 365 Z" fill="#3c3c42"/>
  <path d="M630 360 L634 370 L638 367 Z M642 362 L646 373 L649 367Z" fill="#6a6ad0"/>
  <ellipse cx="632.5" cy="297" rx="6.5" ry="20" fill="#d0ae94" transform="rotate(-16 632.5 297)"/>
  <path d="M625 300 Q621 278 630 276 Q636 275 639 282 Q630 282 628 304 Z" fill="#1e1616"/>
  <path d="M630 310 Q635 316 639 311 L637 318 L632 318Z" fill="#4a3a30"/>
  <path d="M663 312 L680 311 L685 348 L669 350 Z" fill="#c4a47c"/>
  <path d="M663 314 L659 330 L663 332 L667 318Z" fill="#c4a47c"/>
  <path d="M668 348 L682 348 L683 375 L672 373 Z" fill="#23465a"/>
  <path d="M671 372 L676 380 L680 376Z" fill="#3a2a20"/>
  <path d="M665 302 Q663 280 673 280 Q682 281 682 304 L681 326 L676 322 L677 290 Q672 285 668 292 L667 318 Z" fill="#1e1616"/>
  <ellipse cx="673" cy="302" rx="6" ry="18" fill="#d0ae94" transform="rotate(-8 673 302)"/>
  <path d="M668 310 Q673 322 679 310 L677 320 Q673 324 670 318Z" fill="#8a8a8a"/>
  <path d="M692 289 L696 288 L705 313 L701 316 Z" fill="#4e5a80"/>
  <path d="M702 311 L720 311 L722 346 L705 347 Z" fill="#4e5a80"/>
  <path d="M705 344 L717 344 L718 366 L707 367 Z" fill="#2a2a2e"/>
  <path d="M704 362 L708 370 L712 367Z M713 364 L718 373 L720 367Z" fill="#151515"/>
  <ellipse cx="711" cy="301" rx="6" ry="17" fill="#d0ae94" transform="rotate(-10 711 301)"/>
  <path d="M703 300 Q702 284 710 283 Q716 283 718 290 Q710 289 707 306 Z" fill="#1e1616"/>
  <ellipse cx="712" cy="311" rx="2.5" ry="2.5" fill="#f0f0f0"/>
 </g>
 <!-- gizmo -->
 <path d="M559.5 440 L560 431" stroke="#2aa83a" stroke-width="2.2"/>
 <path d="M560 427 L563 433 L557 433 Z" fill="#2aa83a"/>
 <path d="M557 443 L549 449" stroke="#1e2cc8" stroke-width="2.6"/>
 <path d="M546.5 451 L549 446 L552 449.5 Z" fill="#1e2cc8"/>
 <path d="M561 444 L565 453" stroke="#c82020" stroke-width="2.2"/>
 <path d="M566.5 456.5 L562.5 452 L567 451 Z" fill="#c82020"/>
 <circle cx="560" cy="442" r="3.2" fill="none" stroke="#d8d8e8" stroke-width="1.6"/>
 <path d="M553 442 L556 440.5 L556 443.5Z M567 442 L564 440.5 L564 443.5Z M560 449 L558.5 446 L561.5 446Z" fill="#d8d8e8"/>
 <!-- corner triangles -->
 <path d="M529 124 L540 124 L529 135 Z" fill="#3c9ad2"/>
 <path d="M812 124 L801 124 L812 135 Z" fill="#3c9ad2"/>
 <path d="M529 493 L540 493 L529 482 Z" fill="#3c9ad2"/>
 <path d="M812 493 L801 493 L812 482 Z" fill="#3c9ad2"/>
</svg>
</div>
<div class="t" style="left:540px;top:129px;color:#e8e8e8;font-weight:bold;font-size:11px;text-shadow:1px 1px 0 #000">自定义视图 3</div>
<!-- viewer bottom bar -->
<div class="a" style="left:243px;top:493px;width:569px;height:1px;background:#111"></div>
<svg class="a" style="left:243px;top:494px" width="569" height="21" viewBox="243 494 569 21">
 <rect x="243" y="494" width="569" height="21" fill="#252525"/>
 <rect x="248" y="498.5" width="11" height="8" fill="#7e7e7e" stroke="#bdbdbd" stroke-width="1"/>
 <path d="M251.5 500.5 L256 502.5 L251.5 504.5Z" fill="#e0e0e0"/>
 <path d="M260 501 L260 508 L251 508 M262 503 L262 510 L253 510" stroke="#8a8a8a" stroke-width="1" fill="none"/>
 <rect x="269.5" y="499" width="13" height="9" fill="#7e7e7e" stroke="#9d9d9d" stroke-width="1"/>
 <rect x="272" y="509" width="8" height="1.2" fill="#9d9d9d"/>
 <path d="M343.5 501 L351.5 501 L347.5 507Z" fill="#dcdcdc"/>
 <rect x="355" y="496" width="1" height="17" fill="#1a1a1a"/>
 <rect x="361.5" y="500.5" width="12" height="9" fill="none" stroke="#dcdcdc" stroke-width="1.2" stroke-dasharray="2.5 1"/>
 <path d="M367.5 503.5 L367.5 506.5 M366 505 L369 505" stroke="#dcdcdc" stroke-width="1"/>
 <path d="M372.5 511 L375.5 511 L374 513 Z" fill="#dcdcdc"/>
 <path d="M383.5 509.5 L388 501 L396 500 L396.5 509.5 Z" fill="none" stroke="#dcdcdc" stroke-width="1"/>
 <g fill="#dcdcdc"><rect x="382" y="508" width="3" height="3"/><rect x="395" y="508" width="3" height="3"/><rect x="395" y="499" width="3" height="3"/><rect x="387" y="500" width="2" height="2"/></g>
 <rect x="401" y="496" width="1" height="17" fill="#1a1a1a"/>
 <rect x="470" y="496" width="1" height="17" fill="#1a1a1a"/>
 <path d="M474.5 501.5 L478 501.5 L479.5 499.5 L484 499.5 L485.5 501.5 L489 501.5 L489 509.5 L474.5 509.5Z" fill="#b8b8b8"/>
 <circle cx="481.7" cy="505.3" r="2.8" fill="#252525"/><circle cx="481.7" cy="505.3" r="1.6" fill="#b8b8b8"/>
 <ellipse cx="502" cy="506.5" rx="6" ry="4" fill="#5e5e5e"/><circle cx="502" cy="506.5" r="2" fill="#252525"/>
 <circle cx="509" cy="500.5" r="3" fill="none" stroke="#5e5e5e" stroke-width="1.3"/>
 <circle cx="524" cy="501.5" r="3.3" fill="#d42828"/>
 <circle cx="521" cy="506.5" r="3.3" fill="#2ab23a"/>
 <circle cx="527" cy="506.5" r="3.3" fill="#3e48c8"/>
 <path d="M531 511 L534 511 L532.5 513Z" fill="#dcdcdc"/>
 <rect x="540" y="496" width="1" height="17" fill="#1a1a1a"/>
 <path d="M610.5 501 L618.5 501 L614.5 507Z" fill="#dcdcdc"/>
 <rect x="624" y="496" width="1" height="17" fill="#1a1a1a"/>
 <rect x="628.5" y="498.5" width="13" height="12" fill="none" stroke="#9a9a9a" stroke-width="1"/>
 <rect x="631.5" y="501.5" width="7" height="6" fill="none" stroke="#9a9a9a" stroke-width="1.2"/>
 <g fill="#8a8a8a"><rect x="650" y="499" width="14" height="11"/></g>
 <g fill="#c8c8c8"><rect x="650" y="499" width="3.5" height="2.75"/><rect x="657" y="499" width="3.5" height="2.75"/><rect x="653.5" y="501.75" width="3.5" height="2.75"/><rect x="660.5" y="501.75" width="3.5" height="2.75"/><rect x="650" y="504.5" width="3.5" height="2.75"/><rect x="657" y="504.5" width="3.5" height="2.75"/><rect x="653.5" y="507.25" width="3.5" height="2.75"/><rect x="660.5" y="507.25" width="3.5" height="2.75"/></g>
 <rect x="669" y="496" width="1" height="17" fill="#1a1a1a"/>
 <path d="M760 501 L768 501 L764 507Z" fill="#dcdcdc"/>
 <rect x="776" y="496" width="1" height="17" fill="#1a1a1a"/>
</svg>
<div class="t" style="left:294px;top:499px;color:#c8c8c8">(16.7%)</div>
<div class="t" style="left:409px;top:499px;color:#c8c8c8;font-size:11px">0:00:00:00</div>
<div class="t" style="left:544px;top:499px;color:#d8d8d8">(四分之一)</div>
<div class="t" style="left:676px;top:498px;color:#e0e0e0">自定义视图 <span style="color:#bdbdbd">3</span></div>
<div class="a" style="left:780px;top:494px;width:32px;height:20px;overflow:hidden"><div class="t" style="left:4px;top:4px;color:#e0e0e0">2 个视图</div></div>

<!-- info panel -->
<div class="a" style="left:817px;top:71px;width:206px;height:152px;background:#252525"></div>
<div class="a" style="left:817px;top:71px;width:206px;height:28px;background:#1c1c1c"></div>
<div class="a" style="left:817px;top:71px;width:64px;height:28px;background:#262626"></div>
<div class="a" style="left:948px;top:71px;width:1px;height:28px;background:#2a2a2a"></div>
<div class="t" style="left:830px;top:78px;color:#e0e0e0">信息</div>
<svg class="a" style="left:865px;top:82px" width="8" height="8"><g fill="#d0d0d0"><rect x="0" y="0.5" width="7" height="1.2"/><rect x="0" y="3.3" width="7" height="1.2"/><rect x="0" y="6" width="7" height="1.2"/></g></svg>
<div class="t" style="left:896px;top:78px;color:#7d7d7d">音频</div>
<div class="a" style="left:825px;top:116px;width:20px;height:20px;background:#000"></div>
<div class="a" style="left:850px;top:104px;color:#9a9a9a;font-size:11px;line-height:13.3px;white-space:pre">R :
G :
B :
A :  0</div>
<div class="a" style="left:917px;top:104px;width:1px;height:54px;background:#2c2c2c"></div>
<div class="a" style="left:941px;top:104px;color:#9a9a9a;font-size:11px;line-height:13.3px;white-space:pre">X : 1079
Y :  1145</div>
<svg class="a" style="left:929px;top:127px" width="10" height="10"><path d="M5 0 L5 10 M0 5 L10 5" stroke="#e0e0e0" stroke-width="1.2"/></svg>
<div class="a" style="left:824px;top:161px;width:189px;height:1px;background:#2f2f2f"></div>
<!-- preview -->
<div class="a" style="left:817px;top:227px;width:206px;height:56px;background:#252525"></div>
<div class="t" style="left:830px;top:234px;color:#e0e0e0">预览</div>
<svg class="a" style="left:865px;top:238px" width="8" height="8"><g fill="#d0d0d0"><rect x="0" y="0.5" width="7" height="1.2"/><rect x="0" y="3.3" width="7" height="1.2"/><rect x="0" y="6" width="7" height="1.2"/></g></svg>
<svg class="a" style="left:860px;top:262px" width="118" height="14" viewBox="860 262 118 14">
 <g fill="#bdbdbd">
 <rect x="863" y="263.5" width="2" height="10"/><path d="M875.5 263.5 L875.5 273.5 L866 268.5Z"/>
 <path d="M897 263.5 L897 273.5 L888 268.5Z"/><rect x="898" y="263.5" width="2" height="10"/>
 <path d="M912.5 263 L924.5 268.5 L912.5 274Z"/>
 <rect x="935" y="263.5" width="2" height="10"/><path d="M938.5 263.5 L948 268.5 L938.5 273.5Z"/>
 <path d="M960.5 263.5 L970 268.5 L960.5 273.5Z"/><rect x="971" y="263.5" width="2" height="10"/>
 </g>
</svg>
<!-- character panel -->
<div class="a" style="left:817px;top:287px;width:206px;height:229px;background:#252525"></div>
<div class="a" style="left:817px;top:287px;width:206px;height:27px;background:#1c1c1c"></div>
<div class="a" style="left:917px;top:287px;width:65px;height:27px;background:#262626"></div>
<div class="a" style="left:1005px;top:287px;width:18px;height:27px;background:#1e1e1e"></div>
<div class="t" style="left:827px;top:295px;color:#7d7d7d">效果和预设</div>
<div class="t" style="left:930px;top:295px;color:#e0e0e0">字符</div>
<svg class="a" style="left:966px;top:298px" width="8" height="8"><g fill="#d0d0d0"><rect x="0" y="0.5" width="7" height="1.2"/><rect x="0" y="3.3" width="7" height="1.2"/><rect x="0" y="6" width="7" height="1.2"/></g></svg>
<svg class="a" style="left:1009px;top:296px" width="11" height="9"><path d="M1 0.8 L4.5 4.5 L1 8.2 M5.5 0.8 L9 4.5 L5.5 8.2" stroke="#e0e0e0" stroke-width="1.4" fill="none"/></svg>
<div class="a" style="left:824px;top:322px;width:120px;height:20px;background:#1e1e1e"></div>
<div class="t" style="left:829px;top:327px;color:#d8d8d8">Arial</div>
<svg class="a" style="left:932px;top:330px" width="8" height="5"><path d="M0 0 L8 0 L4.0 5Z" fill="#e0e0e0"/></svg>
<div class="a" style="left:824px;top:346px;width:120px;height:20px;background:#1e1e1e"></div>
<div class="t" style="left:829px;top:351px;color:#d8d8d8">Black</div>
<svg class="a" style="left:932px;top:354px" width="8" height="5"><path d="M0 0 L8 0 L4.0 5Z" fill="#e0e0e0"/></svg>
<svg class="a" style="left:950px;top:325px" width="20" height="18"><path d="M2 16 L1 17 M2.5 15.5 L10 8" stroke="#e0e0e0" stroke-width="1.3"/><path d="M3 16 L11 8 L9 6 L1 14 Z" fill="none" stroke="#d8d8d8" stroke-width="1"/><path d="M9 5 L12 2 Q14 1 15.5 2.5 Q17 4 16 6 L13 9 Z" fill="#cfcfcf"/></svg>
<svg class="a" style="left:948px;top:322px" width="72" height="45" viewBox="948 322 72 45">
 <rect x="987" y="337" width="29" height="28" fill="#fff" stroke="#111" stroke-width="1"/>
 <rect x="993" y="343" width="17" height="16" fill="#111"/>
 <path d="M988 364 L1015 338" stroke="#a2302e" stroke-width="2"/>
 <rect x="975" y="323.5" width="28" height="28.5" fill="#ffd500" stroke="#1a1a1a" stroke-width="1"/>
 <path d="M1005 327 Q1009 324 1012 329 L1012 331" stroke="#d0d0d0" stroke-width="1" fill="none"/>
 <path d="M1010 330 L1014 330 L1012 333Z" fill="#d0d0d0"/>
 <rect x="949.5" y="348.5" width="19" height="16" fill="#fff" stroke="#aaa" stroke-width="1"/>
 <rect x="950" y="349" width="18" height="7" fill="#000"/>
 <rect x="975" y="353" width="11" height="11" fill="#bfc4cc"/>
 <path d="M975.5 363.5 L985.5 353.5" stroke="#c84848" stroke-width="1.3"/>
</svg>
<!-- size row -->
<svg class="a" style="left:820px;top:376px" width="22" height="120" viewBox="820 376 22 120">
 <text x="822" y="391" font-family="Liberation Serif" font-size="11" fill="#c8c8c8">T</text>
 <text x="827" y="391" font-family="Liberation Serif" font-size="17" fill="#c8c8c8">T</text>
 <text x="821" y="413" font-family="Liberation Sans" font-size="12" font-weight="bold" fill="#c8c8c8" letter-spacing="-2">V/A</text>
 <path d="M829 414 L838 414 M829 414 L831.5 412 M829 414 L831.5 416" stroke="#c8c8c8" stroke-width="1" fill="none"/>
 <g fill="#c8c8c8"><rect x="823" y="430" width="16" height="2"/><rect x="823" y="435" width="16" height="2.5"/><rect x="823" y="440" width="16" height="2.5"/></g>
 <path d="M825.5 460 L825.5 472 M823.5 462 L825.5 459.5 L827.5 462 M823.5 470 L825.5 472.5 L827.5 470" stroke="#c8c8c8" stroke-width="1.1" fill="none"/>
 <text x="827" y="472" font-family="Liberation Serif" font-size="16" fill="#c8c8c8">T</text>
 <text x="821" y="493" font-family="Liberation Sans" font-size="11" fill="#c8c8c8">A</text>
 <text x="830" y="489" font-family="Liberation Sans" font-size="8" fill="#c8c8c8">a</text>
 <rect x="821" y="494" width="9" height="1" fill="#c8c8c8"/>
 <path d="M833 491 L833 497 M831 493 L833 490.5 L835 493" stroke="#c8c8c8" stroke-width="1" fill="none"/>
</svg>
<div class="t" style="left:848px;top:379px;color:#4a96cc">300 <span style="color:#c4c4c4">像素</span></div>
<svg class="a" style="left:901px;top:382px" width="7" height="6"><path d="M0 0 L7 0 L3.5 6Z" fill="#9a9a9a"/></svg>
<svg class="a" style="left:927px;top:376px" width="22" height="122" viewBox="927 376 22 122">
 <text x="932" y="386" font-family="Liberation Sans" font-size="9" fill="#c8c8c8">A</text>
 <text x="932" y="396" font-family="Liberation Sans" font-size="9" fill="#c8c8c8">A</text>
 <rect x="931" y="387" width="10" height="1" fill="#c8c8c8"/><rect x="931" y="397" width="10" height="1" fill="#c8c8c8"/>
 <path d="M929 386 L929 395 M927.5 388 L929 386 L930.5 388 M927.5 393 L929 395 L930.5 393" stroke="#c8c8c8" stroke-width="1" fill="none"/>
 <rect x="929" y="399" width="18" height="12" fill="#c8c8c8"/>
 <text x="930.5" y="409.5" font-family="Liberation Sans" font-size="10" font-weight="bold" fill="#252525">VA</text>
 <path d="M929.5 414 L946.5 414 M929.5 414 L932 412 M929.5 414 L932 416 M946.5 414 L944 412 M946.5 414 L944 416" stroke="#c8c8c8" stroke-width="1" fill="none"/>
 <text x="929" y="473" font-family="Liberation Serif" font-size="18" font-weight="bold" fill="#c8c8c8">T</text>
 <path d="M929 475 L945 475 M929 475 L931.5 473 M929 475 L931.5 477 M945 475 L942.5 473 M945 475 L942.5 477" stroke="#c8c8c8" stroke-width="1" fill="none"/>
 <rect x="931.5" y="482.5" width="12" height="10" fill="none" stroke="#c8c8c8" stroke-width="0.8" stroke-dasharray="1 1"/>
 <text x="933" y="491" font-family="Liberation Sans" font-size="9" fill="#c8c8c8">あ</text>
 <path d="M929 496 L935 496 M935 496 L933 494.5 M935 496 L933 497.5 M946 496 L940 496 M940 496 L942 494.5 M940 496 L942 497.5" stroke="#c8c8c8" stroke-width="1" fill="none"/>
</svg>
<div class="t" style="left:952px;top:379px;color:#4a96cc">自动</div>
<svg class="a" style="left:1009px;top:382px" width="7" height="6"><path d="M0 0 L7 0 L3.5 6Z" fill="#9a9a9a"/></svg>
<div class="t" style="left:848px;top:400px;color:#6a6a6a">度量标准</div>
<svg class="a" style="left:901px;top:403px" width="7" height="6"><path d="M0 0 L7 0 L3.5 6Z" fill="#9a9a9a"/></svg>
<div class="t" style="left:951px;top:400px;color:#4a96cc;font-size:11px">0</div>
<svg class="a" style="left:1009px;top:403px" width="7" height="6"><path d="M0 0 L7 0 L3.5 6Z" fill="#9a9a9a"/></svg>
<div class="a" style="left:823px;top:420px;width:192px;height:1px;background:#2c2c2c"></div>
<div class="t" style="left:848px;top:430px;color:#c4c4c4"><span style="color:#777">-</span> 像素</div>
<svg class="a" style="left:901px;top:433px" width="7" height="6"><path d="M0 0 L7 0 L3.5 6Z" fill="#9a9a9a"/></svg>
<div class="a" style="left:910px;top:428px;width:107px;height:18px;background:#1e1e1e"></div>
<svg class="a" style="left:1003px;top:434px" width="10" height="6"><path d="M0 0 L10 0 L5.0 6Z" fill="#e0e0e0"/></svg>
<div class="a" style="left:823px;top:452px;width:192px;height:1px;background:#2c2c2c"></div>
<div class="t" style="left:848px;top:461px;color:#4a96cc;font-size:11px">100 <span style="color:#c4c4c4">%</span></div>
<svg class="a" style="left:901px;top:464px" width="7" height="6"><path d="M0 0 L7 0 L3.5 6Z" fill="#9a9a9a"/></svg>
<div class="t" style="left:951px;top:461px;color:#4a96cc;font-size:11px">100 <span style="color:#c4c4c4">%</span></div>
<svg class="a" style="left:1009px;top:464px" width="7" height="6"><path d="M0 0 L7 0 L3.5 6Z" fill="#9a9a9a"/></svg>
<div class="t" style="left:848px;top:482px;color:#4a96cc">0 <span style="color:#c4c4c4">像素</span></div>
<svg class="a" style="left:901px;top:485px" width="7" height="6"><path d="M0 0 L7 0 L3.5 6Z" fill="#9a9a9a"/></svg>
<div class="t" style="left:951px;top:482px;color:#4a96cc;font-size:11px">0 <span style="color:#c4c4c4">%</span></div>
<svg class="a" style="left:1009px;top:485px" width="7" height="6"><path d="M0 0 L7 0 L3.5 6Z" fill="#9a9a9a"/></svg>
<div class="a" style="left:823px;top:504px;width:192px;height:1px;background:#2c2c2c"></div>
<!-- paragraph panel -->
<div class="a" style="left:817px;top:520px;width:206px;height:248px;background:#252525"></div>
<div class="a" style="left:817px;top:520px;width:206px;height:27px;background:#1c1c1c"></div>
<div class="a" style="left:883px;top:520px;width:64px;height:27px;background:#262626"></div>
<div class="t" style="left:830px;top:528px;color:#7d7d7d">对齐</div>
<div class="t" style="left:896px;top:528px;color:#e0e0e0">段落</div>
<svg class="a" style="left:931px;top:531px" width="8" height="8"><g fill="#d0d0d0"><rect x="0" y="0.5" width="7" height="1.2"/><rect x="0" y="3.3" width="7" height="1.2"/><rect x="0" y="6" width="7" height="1.2"/></g></svg>
<svg class="a" style="left:820px;top:552px" width="190" height="70" viewBox="820 552 190 70">
 <g fill="#d0d0d0">
  <rect x="826" y="555" width="10" height="1.5"/><rect x="826" y="558" width="14" height="1.5"/><rect x="826" y="561" width="10" height="1.5"/><rect x="826" y="564" width="14" height="1.5"/><rect x="826" y="567" width="10" height="1.5"/>
 </g>
 <g fill="#4fa6dc">
  <rect x="855" y="555" width="8" height="1.5"/><rect x="852" y="558" width="14" height="1.5"/><rect x="855" y="561" width="8" height="1.5"/><rect x="852" y="564" width="14" height="1.5"/><rect x="855" y="567" width="8" height="1.5"/>
 </g>
 <g fill="#d0d0d0">
  <rect x="881" y="555" width="10" height="1.5"/><rect x="877" y="558" width="14" height="1.5"/><rect x="881" y="561" width="10" height="1.5"/><rect x="877" y="564" width="14" height="1.5"/><rect x="881" y="567" width="10" height="1.5"/>
  <rect x="906" y="555" width="14" height="1.5"/><rect x="906" y="558" width="14" height="1.5"/><rect x="906" y="561" width="14" height="1.5"/><rect x="906" y="564" width="14" height="1.5"/><rect x="906" y="567" width="8" height="1.5"/>
  <rect x="932" y="555" width="14" height="1.5"/><rect x="932" y="558" width="14" height="1.5"/><rect x="932" y="561" width="14" height="1.5"/><rect x="932" y="564" width="14" height="1.5"/><rect x="935" y="567" width="8" height="1.5"/>
  <rect x="957" y="555" width="14" height="1.5"/><rect x="957" y="558" width="14" height="1.5"/><rect x="957" y="561" width="14" height="1.5"/><rect x="957" y="564" width="14" height="1.5"/><rect x="963" y="567" width="8" height="1.5"/>
  <rect x="986" y="555" width="14" height="1.5"/><rect x="986" y="558" width="14" height="1.5"/><rect x="986" y="561" width="14" height="1.5"/><rect x="986" y="564" width="14" height="1.5"/><rect x="986" y="567" width="14" height="1.5"/>
 </g>
 <rect x="824" y="578" width="190" height="1" fill="#2c2c2c"/>
 <g fill="#d8d8d8" stroke="#d8d8d8">
  <path d="M824 590 L830 590 M828 588 L830.5 590 L828 592" stroke-width="1" fill="none"/>
  <rect x="832" y="584" width="1" height="13" stroke="none"/>
  <g stroke="none"><rect x="835" y="585" width="5" height="1.2"/><rect x="835" y="588" width="5" height="1.2"/><rect x="835" y="591" width="5" height="1.2"/><rect x="835" y="594" width="5" height="1.2"/></g>
  <g stroke="none"><rect x="824" y="602" width="5" height="1.2"/><rect x="824" y="605" width="5" height="1.2"/><rect x="824" y="608" width="5" height="1.2"/><rect x="824" y="611" width="5" height="1.2"/><rect x="831" y="601" width="1" height="13"/></g>
  <path d="M840 607 L834 607 M836 605 L833.5 607 L836 609" stroke-width="1" fill="none"/>
  <path d="M895 586 L901 586 M899 584 L901.5 586 L899 588" stroke-width="1" fill="none"/>
  <g stroke="none"><rect x="903" y="586" width="8" height="3"/><rect x="903" y="590" width="8" height="1.2"/><rect x="903" y="593" width="8" height="1.2"/><rect x="903" y="596" width="8" height="1.2"/></g>
  <g stroke="none"><rect x="903" y="603" width="8" height="1.2"/><rect x="903" y="606" width="8" height="1.2"/><rect x="903" y="609" width="8" height="1.2"/><rect x="903" y="612" width="8" height="3"/></g>
  <path d="M895 615 L901 615 M899 613 L901.5 615 L899 617" stroke-width="1" fill="none"/>
  <path d="M961 584 L967 584 M965 582 L967.5 584 L965 586" stroke-width="1" fill="none"/>
  <g stroke="none"><rect x="969" y="588" width="8" height="1.2"/><rect x="969" y="591" width="8" height="1.2"/><rect x="969" y="594" width="8" height="1.2"/></g>
 </g>
</svg>
<div class="t" style="left:845px;top:584px;color:#4a96cc;font-size:11px">0 <span style="color:#c4c4c4;font-size:12px">像素</span></div>
<div class="t" style="left:918px;top:584px;color:#4a96cc;font-size:11px">0 <span style="color:#c4c4c4;font-size:12px">像素</span></div>
<div class="t" style="left:983px;top:584px;color:#4a96cc;font-size:11px">0 <span style="color:#c4c4c4;font-size:12px">像素</span></div>
<div class="t" style="left:845px;top:601px;color:#4a96cc;font-size:11px">0 <span style="color:#c4c4c4;font-size:12px">像素</span></div>
<div class="t" style="left:918px;top:603px;color:#4a96cc;font-size:11px">0 <span style="color:#c4c4c4;font-size:12px">像素</span></div>
<!-- timeline panel -->
<div class="a" style="left:1px;top:520px;width:812px;height:248px;background:#252525"></div>
<div class="t" style="left:12px;top:530px;color:#bdbdbd;font-size:11px">×</div>
<div class="a" style="left:27px;top:528px;width:10px;height:10px;background:#c2ab86"></div>
<div class="t" style="left:49px;top:528px;color:#d8d8d8">合成 <span style="color:#bdbdbd">2</span></div>
<svg class="a" style="left:94px;top:531px" width="8" height="8"><g fill="#d0d0d0"><rect x="0" y="0.5" width="7" height="1.2"/><rect x="0" y="3.3" width="7" height="1.2"/><rect x="0" y="6" width="7" height="1.2"/></g></svg>
<div class="t" style="left:11px;top:552px;color:#4aa0d8;font-weight:bold;font-size:17px;letter-spacing:0.2px">0:00:00:00</div>
<div class="t" style="left:14px;top:570px;color:#3f8fc5;font-size:10px">00000 (25.00 fps)</div>
<div class="a" style="left:106px;top:554px;width:156px;height:21px;background:#1e1e1e"></div>
<svg class="a" style="left:109px;top:557px" width="22" height="16"><circle cx="8" cy="6" r="3.8" fill="none" stroke="#d0d0d0" stroke-width="1.3"/><path d="M5.3 9 L1.5 12.8" stroke="#d0d0d0" stroke-width="1.5"/><path d="M14 9.5 L19 9.5 L16.5 12 Z" fill="#d0d0d0"/></svg>
<svg class="a" style="left:275px;top:553px" width="180" height="24" viewBox="275 553 180 24">
 <g fill="#c8c8c8">
  <rect x="278" y="561" width="6" height="2.5"/><rect x="284" y="561.5" width="6" height="1.3"/><rect x="285" y="561.5" width="1.2" height="9"/><rect x="286" y="565" width="5" height="1.2"/><rect x="286" y="569" width="5" height="1.2"/>
  <rect x="290" y="559" width="4" height="4"/><rect x="290" y="564" width="4" height="3"/><rect x="290" y="568" width="4" height="3"/>
  <path d="M291 573 L294 573 L292.5 575Z"/>
 </g>
 <path d="M313 556 L315 559 M315 556 L313 559 M311.5 557.5 L316.5 557.5 M314 555.5 L314 560" stroke="#d0d0d0" stroke-width="1.1"/>
 <path d="M321 562 L328 565 L328 572 L321 575 L314 572 L314 565 Z" fill="#9a9a9a" stroke="#d0d0d0" stroke-width="1"/>
 <path d="M314 565 L321 568 L328 565 M321 568 L321 575" fill="none" stroke="#d0d0d0" stroke-width="1"/>
 <rect x="346" y="566" width="16" height="7" fill="#7e7e7e"/>
 <path d="M348 565 Q348 558 354 558 Q360 558 360 565Z" fill="#d0d0d0"/>
 <rect x="353" y="564" width="2" height="5" fill="#d0d0d0"/>
 <rect x="373.5" y="560.5" width="4" height="12" fill="none" stroke="#9a9a9a" stroke-width="1"/>
 <rect x="376.5" y="557.5" width="11" height="13" fill="#6a6a6a" stroke="#c8c8c8" stroke-width="1"/>
 <g fill="#c8c8c8"><rect x="378" y="559" width="1.5" height="1.5"/><rect x="378" y="562" width="1.5" height="1.5"/><rect x="378" y="565" width="1.5" height="1.5"/><rect x="378" y="568" width="1.5" height="1.5"/><rect x="384.5" y="559" width="1.5" height="1.5"/><rect x="384.5" y="562" width="1.5" height="1.5"/><rect x="384.5" y="565" width="1.5" height="1.5"/><rect x="384.5" y="568" width="1.5" height="1.5"/></g>
 <rect x="380.5" y="559" width="3" height="10" fill="#8a8a8a"/>
 <ellipse cx="403" cy="570" rx="4.5" ry="4.5" fill="#7a7a7a" stroke="#9a9a9a"/>
 <ellipse cx="407" cy="566" rx="5" ry="5" fill="#8a8a8a" stroke="#bbb"/>
 <ellipse cx="409" cy="562" rx="4.5" ry="4.5" fill="#aaa" stroke="#ccc"/>
 <rect x="433.5" y="558.5" width="13" height="13" fill="#7a7a7a" stroke="#d0d0d0" stroke-width="1"/>
 <path d="M434.5 561.5 Q438 561 440 565 Q442 569.5 446 569.5" stroke="#e0e0e0" stroke-width="1.2" fill="none"/>
 <g fill="#d0d0d0"><rect x="435" y="556" width="1" height="2"/><rect x="438" y="556" width="1" height="2"/><rect x="441" y="556" width="1" height="2"/><rect x="444" y="556" width="1" height="2"/></g>
</svg>
<!-- header -->
<div class="a" style="left:1px;top:583px;width:812px;height:1px;background:#151515"></div>
<div class="a" style="left:1px;top:584px;width:463px;height:19px;background:#2b2b2b"></div>
<div class="a" style="left:1px;top:603px;width:463px;height:1px;background:#151515"></div>
<svg class="a" style="left:1px;top:584px" width="463" height="19" viewBox="1 584 463 19">
 <path d="M6.5 593.5 Q13.5 586 20.5 593.5 Q13.5 601 6.5 593.5Z" fill="#c8c8c8"/><circle cx="13.5" cy="593.5" r="2.4" fill="#2b2b2b"/><circle cx="13.5" cy="593.5" r="1.1" fill="#c8c8c8"/>
 <path d="M22 591 L25 591 L28.5 588 L28.5 599 L25 596 L22 596Z" fill="#c8c8c8"/>
 <path d="M30 590.5 Q32 593.5 30 596.5 M31.5 589 Q34.5 593.5 31.5 598" stroke="#c8c8c8" stroke-width="1" fill="none"/>
 <circle cx="42" cy="593.5" r="3.3" fill="#c8c8c8"/>
 <path d="M54.5 592 L54.5 590 Q54.5 587.5 57 587.5 Q59.5 587.5 59.5 590 L59.5 592" stroke="#c8c8c8" stroke-width="1.4" fill="none"/>
 <rect x="53" y="592" width="8" height="7" fill="#c8c8c8"/>
 <rect x="69" y="587" width="1" height="13" fill="#151515"/>
 <path d="M86 596 L92 589.5 L97 589.5 L97 594.5 L90.5 601 Z" fill="#c8c8c8"/><circle cx="94" cy="592" r="1" fill="#2b2b2b"/>
 <rect x="101" y="587" width="1" height="13" fill="#151515"/>
 <rect x="133" y="587" width="1" height="13" fill="#151515"/>
 <rect x="311" y="587" width="1" height="13" fill="#151515"/>
 <path d="M318 593 Q318 588 322.5 588 Q327 588 327 593Z" fill="#c8c8c8"/><rect x="316.5" y="594" width="12" height="1.2" fill="#c8c8c8"/><rect x="321.8" y="593" width="1.4" height="5" fill="#c8c8c8"/>
 <circle cx="337" cy="593.5" r="2.5" fill="none" stroke="#c8c8c8" stroke-width="1"/>
 <path d="M337 588.5 L337 590 M337 597 L337 598.5 M332 593.5 L333.5 593.5 M340.5 593.5 L342 593.5 M333.5 590 L334.5 591 M339.5 596 L340.5 597 M340.5 590 L339.5 591 M334.5 596 L333.5 597" stroke="#c8c8c8" stroke-width="1"/>
 <path d="M347 588 L357 599" stroke="#c8c8c8" stroke-width="1.4" stroke-dasharray="1.6 0.8"/>
 <text x="361" y="599" font-family="Liberation Serif" font-style="italic" font-size="14" fill="#c8c8c8">fx</text>
 <rect x="377" y="588.5" width="10" height="10" fill="none" stroke="#c8c8c8" stroke-width="1"/>
 <path d="M380 588.5 L380 598.5 M384 588.5 L384 598.5 M377 592 L387 592 M377 595 L387 595" stroke="#c8c8c8" stroke-width="0.8"/>
 <ellipse cx="395" cy="596" rx="3.3" ry="3.3" fill="#8a8a8a"/><ellipse cx="398" cy="593.5" rx="3.3" ry="3.3" fill="#aaa"/><ellipse cx="400.5" cy="591" rx="3.3" ry="3.3" fill="#c8c8c8"/>
 <circle cx="413" cy="593.5" r="5" fill="#f0f0f0"/><path d="M416.5 590 A5 5 0 0 1 409.5 597 Z" fill="#111"/>
 <path d="M427 588 L432 590.5 L432 596.5 L427 599 L422 596.5 L422 590.5 Z M422 590.5 L427 593 L432 590.5 M427 593 L427 599" fill="none" stroke="#c8c8c8" stroke-width="1.1" stroke-linejoin="round"/>
 <rect x="448" y="587" width="1" height="13" fill="#151515"/>
</svg>
<div class="t" style="left:108px;top:589px;color:#9a9a9a;font-size:11px">#</div>
<div class="t" style="left:140px;top:588px;color:#cfcfcf">源名称</div>
<!-- left timeline separator -->
<div class="a" style="left:464px;top:583px;width:1px;height:165px;background:#151515"></div>
<!-- time area header -->
<div class="a" style="left:465px;top:553px;width:330px;height:10px;background:#252525"></div>
<div class="a" style="left:472px;top:554px;width:317px;height:8px;background:#6c6c6c"></div>
<div class="a" style="left:465px;top:562px;width:348px;height:1px;background:#111"></div>
<div class="a" style="left:465px;top:582px;width:348px;height:1px;background:#111"></div>
<div class="a" style="left:465px;top:583px;width:330px;height:15px;background:#252525"></div>
<div class="a" style="left:472px;top:583px;width:317px;height:15px;background:#656565"></div>
<div class="a" style="left:465px;top:598px;width:330px;height:6px;background:#1a1a1a"></div>
<svg class="a" style="left:464px;top:550px" width="350" height="56" viewBox="464 550 350 56">
 <path d="M472 554 L468 554 Q465 554 465 558 Q465 562 468 562 L472 562Z" fill="#3cb4e6"/>
 <path d="M788.5 554 L792 554 Q795.5 554 795.5 558 Q795.5 562 792 562 L788.5 562Z" fill="#3cb4e6"/>
 <path d="M468 556 L468 560 M470 556 L470 560 M791 556 L791 560" stroke="#1f5f80" stroke-width="0.8"/>
 <path d="M471.5 583 L468.5 583 Q466 583 466 586 L466 595 Q466 598 468.5 598 L471.5 598Z" fill="#3cb4e6"/>
 <path d="M788.5 583 L791 583 Q793.5 583 793.5 586 L793.5 595 Q793.5 598 791 598 L788.5 598Z" fill="#3cb4e6"/>
 <path d="M468.5 585.5 L468.5 595.5 M791 585.5 L791 595.5" stroke="#1f5f80" stroke-width="0.8"/>
 <g fill="#c4c4c4"><rect x="535" y="577" width="1" height="5"/><rect x="598" y="577" width="1" height="5"/><rect x="662" y="577" width="1" height="5"/><rect x="725" y="577" width="1" height="5"/><rect x="788" y="577" width="1" height="5"/></g>
 <g fill="#38b048"><rect x="472" y="599.5" width="3" height="3"/><rect x="535" y="599.5" width="3" height="3"/><rect x="598" y="599.5" width="3" height="3"/><rect x="661" y="599.5" width="3" height="3"/><rect x="724" y="599.5" width="3" height="3"/></g>
 <path d="M799.5 585.5 L810.5 585.5 L810.5 594 L805 599.5 L799.5 594 Z" fill="#6a6a6a" stroke="#cfcfcf" stroke-width="1"/>
</svg>
<div class="t" style="left:473px;top:566px;color:#c4c4c4;font-size:11px">0s</div>
<div class="t" style="left:527px;top:566px;color:#c4c4c4;font-size:11px">01s</div>
<div class="t" style="left:590px;top:566px;color:#c4c4c4;font-size:11px">02s</div>
<div class="t" style="left:654px;top:566px;color:#c4c4c4;font-size:11px">03s</div>
<div class="t" style="left:717px;top:566px;color:#c4c4c4;font-size:11px">04s</div>
<div class="t" style="left:780px;top:566px;color:#c4c4c4;font-size:11px">05s</div>
<div class="a" style="left:795px;top:604px;width:18px;height:144px;background:#1b1b1b"></div>
<div class="a" style="left:1px;top:604px;width:463px;height:19px;background:#292929"></div>
<div class="a" style="left:1px;top:623px;width:463px;height:1px;background:#1b1b1b"></div>
<svg class="a" style="left:5px;top:607px" width="16" height="12" viewBox="0 0 16 12"><rect width="16" height="12" fill="#181818"/><path d="M1.5 6 Q8 -0.5 14.5 6 Q8 12.5 1.5 6Z" fill="#c8c8c8"/><circle cx="8" cy="6" r="2.6" fill="#2a2a2a"/><circle cx="8" cy="6" r="1.2" fill="#c8c8c8"/></svg>
<div class="a" style="left:36px;top:606px;width:13px;height:13px;background:#161616"></div>
<div class="a" style="left:51px;top:606px;width:13px;height:13px;background:#161616"></div>
<svg class="a" style="left:74px;top:609px" width="9" height="8"><path d="M0.5 0.5 L8 4 L0.5 7.5Z" fill="#c4c4c4"/></svg>
<div class="a" style="left:87px;top:605px;width:15px;height:16px;background:#e4b9cb"></div>
<div class="t" style="left:108px;top:609px;color:#9a9a9a;font-weight:bold;font-size:11px">1</div>
<svg class="a" style="left:138px;top:605px" width="14" height="12" viewBox="0 0 14 12"><circle cx="4" cy="3" r="2.4" fill="#111" stroke="#ddd" stroke-width="0.8"/><circle cx="9" cy="3" r="2.4" fill="#111" stroke="#ddd" stroke-width="0.8"/><rect x="1.5" y="5.5" width="8" height="5" fill="#111" stroke="#ddd" stroke-width="0.8"/><path d="M10 7 L13 5.5 L13 10.5 L10 9Z" fill="#111" stroke="#ddd" stroke-width="0.8"/></svg>
<div class="t" style="left:160px;top:608px;color:#c8c8c8;font-weight:bold;font-size:12px">摄像机 1</div>
<svg class="a" style="left:315px;top:606px" width="14" height="13" viewBox="0 0 14 13"><rect width="14" height="13" fill="#151515"/><path d="M2 6 Q2 1.8 7 1.8 Q12 1.8 12 6 Z" fill="#d0d0d0"/><rect x="1" y="7" width="12" height="1.3" fill="#d0d0d0"/><rect x="6.3" y="6" width="1.4" height="4.5" fill="#d0d0d0"/><path d="M5 10 L9 10 L7 12Z" fill="#d0d0d0"/><rect x="5.2" y="3" width="1" height="3" fill="#151515"/><rect x="7.8" y="3" width="1" height="3" fill="#151515"/></svg>
<div class="a" style="left:464px;top:604px;width:331px;height:20px;background:linear-gradient(90deg,#151515 1px,#2a2a2a 1px,#2a2a2a 8px,#2a2624 8px)"></div>
<div class="a" style="left:472px;top:605px;width:316px;height:16px;background:#937b82"></div>
<div class="a" style="left:1px;top:624px;width:463px;height:19px;background:#292929"></div>
<div class="a" style="left:1px;top:643px;width:463px;height:1px;background:#1b1b1b"></div>
<svg class="a" style="left:5px;top:627px" width="16" height="12" viewBox="0 0 16 12"><rect width="16" height="12" fill="#181818"/><path d="M1.5 6 Q8 -0.5 14.5 6 Q8 12.5 1.5 6Z" fill="#c8c8c8"/><circle cx="8" cy="6" r="2.6" fill="#2a2a2a"/><circle cx="8" cy="6" r="1.2" fill="#c8c8c8"/></svg>
<div class="a" style="left:36px;top:626px;width:13px;height:13px;background:#161616"></div>
<div class="a" style="left:51px;top:626px;width:13px;height:13px;background:#161616"></div>
<svg class="a" style="left:74px;top:629px" width="9" height="8"><path d="M0.5 0.5 L8 4 L0.5 7.5Z" fill="#c4c4c4"/></svg>
<div class="a" style="left:87px;top:625px;width:15px;height:16px;background:#b9a585"></div>
<div class="t" style="left:108px;top:629px;color:#9a9a9a;font-weight:bold;font-size:11px">2</div>
<svg class="a" style="left:137px;top:626px" width="17" height="14" viewBox="0 0 17 14"><rect x="0.5" y="0.5" width="16" height="13" fill="#eee"/><rect x="3.5" y="1.5" width="10" height="11" fill="#152025"/><circle cx="6.5" cy="5" r="2.2" fill="#3f8fae"/><circle cx="10.5" cy="5" r="2.2" fill="#b85a44"/><path d="M4 12 L8.5 7 L13 12 Z" fill="#3da54e"/><g fill="#333"><rect x="1.3" y="2" width="1.2" height="1.2"/><rect x="1.3" y="4.5" width="1.2" height="1.2"/><rect x="1.3" y="7" width="1.2" height="1.2"/><rect x="1.3" y="9.5" width="1.2" height="1.2"/><rect x="14.5" y="2" width="1.2" height="1.2"/><rect x="14.5" y="4.5" width="1.2" height="1.2"/><rect x="14.5" y="7" width="1.2" height="1.2"/><rect x="14.5" y="9.5" width="1.2" height="1.2"/></g></svg>
<div class="t" style="left:160px;top:628px;color:#c8c8c8;font-weight:bold;font-size:12px">4挥手人 10秒</div>
<svg class="a" style="left:315px;top:626px" width="14" height="13" viewBox="0 0 14 13"><rect width="14" height="13" fill="#151515"/><path d="M2 6 Q2 1.8 7 1.8 Q12 1.8 12 6 Z" fill="#d0d0d0"/><rect x="1" y="7" width="12" height="1.3" fill="#d0d0d0"/><rect x="6.3" y="6" width="1.4" height="4.5" fill="#d0d0d0"/><path d="M5 10 L9 10 L7 12Z" fill="#d0d0d0"/><rect x="5.2" y="3" width="1" height="3" fill="#151515"/><rect x="7.8" y="3" width="1" height="3" fill="#151515"/></svg>
<div class="a" style="left:331px;top:626px;width:13px;height:13px;background:#161616"></div>
<svg class="a" style="left:345px;top:626px" width="14" height="13"><rect width="14" height="13" fill="#161616"/><path d="M2.5 11.5 L11.5 1.5" stroke="#d0d0d0" stroke-width="1.4"/></svg>
<div class="a" style="left:391px;top:626px;width:13px;height:13px;background:#161616"></div>
<div class="a" style="left:406px;top:626px;width:13px;height:13px;background:#161616"></div>
<svg class="a" style="left:421px;top:626px" width="14" height="14" viewBox="0 0 14 14"><rect width="14" height="14" fill="#151515"/><path d="M7 1.5 L12.5 4.2 L12.5 10 L7 12.8 L1.5 10 L1.5 4.2 Z M1.5 4.2 L7 7 L12.5 4.2 M7 7 L7 12.8" fill="none" stroke="#c8c8c8" stroke-width="1.1" stroke-linejoin="round"/></svg>
<div class="a" style="left:464px;top:624px;width:331px;height:20px;background:linear-gradient(90deg,#151515 1px,#2a2a2a 1px,#2a2a2a 8px,#2a2624 8px)"></div>
<div class="a" style="left:472px;top:625px;width:323px;height:16px;background:#6f6552"></div>
<svg class="a" style="left:472px;top:625px" width="6" height="5"><path d="M0 5 Q0 0 6 0 L0 0Z" fill="#3a3a3a"/></svg>
<div class="a" style="left:1px;top:644px;width:463px;height:19px;background:#292929"></div>
<div class="a" style="left:1px;top:663px;width:463px;height:1px;background:#1b1b1b"></div>
<svg class="a" style="left:5px;top:647px" width="16" height="12" viewBox="0 0 16 12"><rect width="16" height="12" fill="#181818"/><path d="M1.5 6 Q8 -0.5 14.5 6 Q8 12.5 1.5 6Z" fill="#c8c8c8"/><circle cx="8" cy="6" r="2.6" fill="#2a2a2a"/><circle cx="8" cy="6" r="1.2" fill="#c8c8c8"/></svg>
<div class="a" style="left:36px;top:646px;width:13px;height:13px;background:#161616"></div>
<div class="a" style="left:51px;top:646px;width:13px;height:13px;background:#161616"></div>
<svg class="a" style="left:74px;top:649px" width="9" height="8"><path d="M0.5 0.5 L8 4 L0.5 7.5Z" fill="#c4c4c4"/></svg>
<div class="a" style="left:87px;top:645px;width:15px;height:16px;background:#b9a585"></div>
<div class="t" style="left:108px;top:649px;color:#9a9a9a;font-weight:bold;font-size:11px">3</div>
<svg class="a" style="left:137px;top:646px" width="17" height="14" viewBox="0 0 17 14"><rect x="0.5" y="0.5" width="16" height="13" fill="#eee"/><rect x="3.5" y="1.5" width="10" height="11" fill="#152025"/><circle cx="6.5" cy="5" r="2.2" fill="#3f8fae"/><circle cx="10.5" cy="5" r="2.2" fill="#b85a44"/><path d="M4 12 L8.5 7 L13 12 Z" fill="#3da54e"/><g fill="#333"><rect x="1.3" y="2" width="1.2" height="1.2"/><rect x="1.3" y="4.5" width="1.2" height="1.2"/><rect x="1.3" y="7" width="1.2" height="1.2"/><rect x="1.3" y="9.5" width="1.2" height="1.2"/><rect x="14.5" y="2" width="1.2" height="1.2"/><rect x="14.5" y="4.5" width="1.2" height="1.2"/><rect x="14.5" y="7" width="1.2" height="1.2"/><rect x="14.5" y="9.5" width="1.2" height="1.2"/></g></svg>
<div class="t" style="left:160px;top:648px;color:#c8c8c8;font-weight:bold;font-size:12px">3下蹲人 10秒</div>
<svg class="a" style="left:315px;top:646px" width="14" height="13" viewBox="0 0 14 13"><rect width="14" height="13" fill="#151515"/><path d="M2 6 Q2 1.8 7 1.8 Q12 1.8 12 6 Z" fill="#d0d0d0"/><rect x="1" y="7" width="12" height="1.3" fill="#d0d0d0"/><rect x="6.3" y="6" width="1.4" height="4.5" fill="#d0d0d0"/><path d="M5 10 L9 10 L7 12Z" fill="#d0d0d0"/><rect x="5.2" y="3" width="1" height="3" fill="#151515"/><rect x="7.8" y="3" width="1" height="3" fill="#151515"/></svg>
<div class="a" style="left:331px;top:646px;width:13px;height:13px;background:#161616"></div>
<svg class="a" style="left:345px;top:646px" width="14" height="13"><rect width="14" height="13" fill="#161616"/><path d="M2.5 11.5 L11.5 1.5" stroke="#d0d0d0" stroke-width="1.4"/></svg>
<div class="a" style="left:391px;top:646px;width:13px;height:13px;background:#161616"></div>
<div class="a" style="left:406px;top:646px;width:13px;height:13px;background:#161616"></div>
<svg class="a" style="left:421px;top:646px" width="14" height="14" viewBox="0 0 14 14"><rect width="14" height="14" fill="#151515"/><path d="M7 1.5 L12.5 4.2 L12.5 10 L7 12.8 L1.5 10 L1.5 4.2 Z M1.5 4.2 L7 7 L12.5 4.2 M7 7 L7 12.8" fill="none" stroke="#c8c8c8" stroke-width="1.1" stroke-linejoin="round"/></svg>
<div class="a" style="left:464px;top:644px;width:331px;height:20px;background:linear-gradient(90deg,#151515 1px,#2a2a2a 1px,#2a2a2a 8px,#2a2624 8px)"></div>
<div class="a" style="left:472px;top:645px;width:323px;height:16px;background:#6f6552"></div>
<svg class="a" style="left:472px;top:645px" width="6" height="5"><path d="M0 5 Q0 0 6 0 L0 0Z" fill="#3a3a3a"/></svg>
<div class="a" style="left:1px;top:664px;width:463px;height:19px;background:#292929"></div>
<div class="a" style="left:1px;top:683px;width:463px;height:1px;background:#1b1b1b"></div>
<svg class="a" style="left:5px;top:667px" width="16" height="12" viewBox="0 0 16 12"><rect width="16" height="12" fill="#181818"/><path d="M1.5 6 Q8 -0.5 14.5 6 Q8 12.5 1.5 6Z" fill="#c8c8c8"/><circle cx="8" cy="6" r="2.6" fill="#2a2a2a"/><circle cx="8" cy="6" r="1.2" fill="#c8c8c8"/></svg>
<div class="a" style="left:36px;top:666px;width:13px;height:13px;background:#161616"></div>
<div class="a" style="left:51px;top:666px;width:13px;height:13px;background:#161616"></div>
<svg class="a" style="left:74px;top:669px" width="9" height="8"><path d="M0.5 0.5 L8 4 L0.5 7.5Z" fill="#c4c4c4"/></svg>
<div class="a" style="left:87px;top:665px;width:15px;height:16px;background:#b9a585"></div>
<div class="t" style="left:108px;top:669px;color:#9a9a9a;font-weight:bold;font-size:11px">4</div>
<svg class="a" style="left:137px;top:666px" width="17" height="14" viewBox="0 0 17 14"><rect x="0.5" y="0.5" width="16" height="13" fill="#eee"/><rect x="3.5" y="1.5" width="10" height="11" fill="#152025"/><circle cx="6.5" cy="5" r="2.2" fill="#3f8fae"/><circle cx="10.5" cy="5" r="2.2" fill="#b85a44"/><path d="M4 12 L8.5 7 L13 12 Z" fill="#3da54e"/><g fill="#333"><rect x="1.3" y="2" width="1.2" height="1.2"/><rect x="1.3" y="4.5" width="1.2" height="1.2"/><rect x="1.3" y="7" width="1.2" height="1.2"/><rect x="1.3" y="9.5" width="1.2" height="1.2"/><rect x="14.5" y="2" width="1.2" height="1.2"/><rect x="14.5" y="4.5" width="1.2" height="1.2"/><rect x="14.5" y="7" width="1.2" height="1.2"/><rect x="14.5" y="9.5" width="1.2" height="1.2"/></g></svg>
<div class="t" style="left:160px;top:668px;color:#c8c8c8;font-weight:bold;font-size:12px">2跳跃人 10秒</div>
<svg class="a" style="left:315px;top:666px" width="14" height="13" viewBox="0 0 14 13"><rect width="14" height="13" fill="#151515"/><path d="M2 6 Q2 1.8 7 1.8 Q12 1.8 12 6 Z" fill="#d0d0d0"/><rect x="1" y="7" width="12" height="1.3" fill="#d0d0d0"/><rect x="6.3" y="6" width="1.4" height="4.5" fill="#d0d0d0"/><path d="M5 10 L9 10 L7 12Z" fill="#d0d0d0"/><rect x="5.2" y="3" width="1" height="3" fill="#151515"/><rect x="7.8" y="3" width="1" height="3" fill="#151515"/></svg>
<div class="a" style="left:331px;top:666px;width:13px;height:13px;background:#161616"></div>
<svg class="a" style="left:345px;top:666px" width="14" height="13"><rect width="14" height="13" fill="#161616"/><path d="M2.5 11.5 L11.5 1.5" stroke="#d0d0d0" stroke-width="1.4"/></svg>
<div class="a" style="left:391px;top:666px;width:13px;height:13px;background:#161616"></div>
<div class="a" style="left:406px;top:666px;width:13px;height:13px;background:#161616"></div>
<svg class="a" style="left:421px;top:666px" width="14" height="14" viewBox="0 0 14 14"><rect width="14" height="14" fill="#151515"/><path d="M7 1.5 L12.5 4.2 L12.5 10 L7 12.8 L1.5 10 L1.5 4.2 Z M1.5 4.2 L7 7 L12.5 4.2 M7 7 L7 12.8" fill="none" stroke="#c8c8c8" stroke-width="1.1" stroke-linejoin="round"/></svg>
<div class="a" style="left:464px;top:664px;width:331px;height:20px;background:linear-gradient(90deg,#151515 1px,#2a2a2a 1px,#2a2a2a 8px,#2a2624 8px)"></div>
<div class="a" style="left:472px;top:665px;width:323px;height:16px;background:#6f6552"></div>
<svg class="a" style="left:472px;top:665px" width="6" height="5"><path d="M0 5 Q0 0 6 0 L0 0Z" fill="#3a3a3a"/></svg>
<div class="a" style="left:1px;top:684px;width:463px;height:19px;background:#292929"></div>
<div class="a" style="left:1px;top:703px;width:463px;height:1px;background:#1b1b1b"></div>
<svg class="a" style="left:5px;top:687px" width="16" height="12" viewBox="0 0 16 12"><rect width="16" height="12" fill="#181818"/><path d="M1.5 6 Q8 -0.5 14.5 6 Q8 12.5 1.5 6Z" fill="#c8c8c8"/><circle cx="8" cy="6" r="2.6" fill="#2a2a2a"/><circle cx="8" cy="6" r="1.2" fill="#c8c8c8"/></svg>
<div class="a" style="left:36px;top:686px;width:13px;height:13px;background:#161616"></div>
<div class="a" style="left:51px;top:686px;width:13px;height:13px;background:#161616"></div>
<svg class="a" style="left:74px;top:689px" width="9" height="8"><path d="M0.5 0.5 L8 4 L0.5 7.5Z" fill="#c4c4c4"/></svg>
<div class="a" style="left:87px;top:685px;width:15px;height:16px;background:#b9a585"></div>
<div class="t" style="left:108px;top:689px;color:#9a9a9a;font-weight:bold;font-size:11px">5</div>
<svg class="a" style="left:137px;top:686px" width="17" height="14" viewBox="0 0 17 14"><rect x="0.5" y="0.5" width="16" height="13" fill="#eee"/><rect x="3.5" y="1.5" width="10" height="11" fill="#152025"/><circle cx="6.5" cy="5" r="2.2" fill="#3f8fae"/><circle cx="10.5" cy="5" r="2.2" fill="#b85a44"/><path d="M4 12 L8.5 7 L13 12 Z" fill="#3da54e"/><g fill="#333"><rect x="1.3" y="2" width="1.2" height="1.2"/><rect x="1.3" y="4.5" width="1.2" height="1.2"/><rect x="1.3" y="7" width="1.2" height="1.2"/><rect x="1.3" y="9.5" width="1.2" height="1.2"/><rect x="14.5" y="2" width="1.2" height="1.2"/><rect x="14.5" y="4.5" width="1.2" height="1.2"/><rect x="14.5" y="7" width="1.2" height="1.2"/><rect x="14.5" y="9.5" width="1.2" height="1.2"/></g></svg>
<div class="t" style="left:160px;top:688px;color:#c8c8c8;font-weight:bold;font-size:12px">1拍手人 10秒</div>
<svg class="a" style="left:315px;top:686px" width="14" height="13" viewBox="0 0 14 13"><rect width="14" height="13" fill="#151515"/><path d="M2 6 Q2 1.8 7 1.8 Q12 1.8 12 6 Z" fill="#d0d0d0"/><rect x="1" y="7" width="12" height="1.3" fill="#d0d0d0"/><rect x="6.3" y="6" width="1.4" height="4.5" fill="#d0d0d0"/><path d="M5 10 L9 10 L7 12Z" fill="#d0d0d0"/><rect x="5.2" y="3" width="1" height="3" fill="#151515"/><rect x="7.8" y="3" width="1" height="3" fill="#151515"/></svg>
<div class="a" style="left:331px;top:686px;width:13px;height:13px;background:#161616"></div>
<svg class="a" style="left:345px;top:686px" width="14" height="13"><rect width="14" height="13" fill="#161616"/><path d="M2.5 11.5 L11.5 1.5" stroke="#d0d0d0" stroke-width="1.4"/></svg>
<div class="a" style="left:391px;top:686px;width:13px;height:13px;background:#161616"></div>
<div class="a" style="left:406px;top:686px;width:13px;height:13px;background:#161616"></div>
<svg class="a" style="left:421px;top:686px" width="14" height="14" viewBox="0 0 14 14"><rect width="14" height="14" fill="#151515"/><path d="M7 1.5 L12.5 4.2 L12.5 10 L7 12.8 L1.5 10 L1.5 4.2 Z M1.5 4.2 L7 7 L12.5 4.2 M7 7 L7 12.8" fill="none" stroke="#c8c8c8" stroke-width="1.1" stroke-linejoin="round"/></svg>
<div class="a" style="left:464px;top:684px;width:331px;height:20px;background:linear-gradient(90deg,#151515 1px,#2a2a2a 1px,#2a2a2a 8px,#2a2624 8px)"></div>
<div class="a" style="left:472px;top:685px;width:323px;height:16px;background:#6f6552"></div>
<svg class="a" style="left:472px;top:685px" width="6" height="5"><path d="M0 5 Q0 0 6 0 L0 0Z" fill="#3a3a3a"/></svg>
<div class="a" style="left:1px;top:704px;width:463px;height:19px;background:#363636"></div>
<div class="a" style="left:1px;top:723px;width:463px;height:1px;background:#1b1b1b"></div>
<svg class="a" style="left:5px;top:707px" width="16" height="12" viewBox="0 0 16 12"><rect width="16" height="12" fill="#181818"/><path d="M1.5 6 Q8 -0.5 14.5 6 Q8 12.5 1.5 6Z" fill="#c8c8c8"/><circle cx="8" cy="6" r="2.6" fill="#2a2a2a"/><circle cx="8" cy="6" r="1.2" fill="#c8c8c8"/></svg>
<div class="a" style="left:36px;top:706px;width:13px;height:13px;background:#161616"></div>
<div class="a" style="left:51px;top:706px;width:13px;height:13px;background:#161616"></div>
<svg class="a" style="left:74px;top:709px" width="9" height="8"><path d="M0.5 0.5 L8 4 L0.5 7.5Z" fill="#c4c4c4"/></svg>
<div class="a" style="left:87px;top:705px;width:15px;height:16px;background:#b5b3dc"></div>
<div class="t" style="left:108px;top:709px;color:#9a9a9a;font-weight:bold;font-size:11px">6</div>
<svg class="a" style="left:137px;top:706px" width="17" height="15" viewBox="0 0 17 15"><rect x="0.5" y="0.5" width="16" height="14" fill="#f0f0f0"/><rect x="2" y="2" width="13" height="11" fill="#5f97b8"/><path d="M2 8 Q7 5 15 9 L15 13 L2 13Z" fill="#c8dce6"/><path d="M2 4 L15 4 L15 6 Q8 4 2 7Z" fill="#3f7aa0"/></svg>
<div class="a" style="left:156px;top:704px;width:155px;height:19px;background:#a9a9a9"></div>
<div class="t" style="left:160px;top:708px;color:#151515;font-weight:bold;font-size:12px">地板.jpg</div>
<svg class="a" style="left:315px;top:706px" width="14" height="13" viewBox="0 0 14 13"><rect width="14" height="13" fill="#151515"/><path d="M2 6 Q2 1.8 7 1.8 Q12 1.8 12 6 Z" fill="#d0d0d0"/><rect x="1" y="7" width="12" height="1.3" fill="#d0d0d0"/><rect x="6.3" y="6" width="1.4" height="4.5" fill="#d0d0d0"/><path d="M5 10 L9 10 L7 12Z" fill="#d0d0d0"/><rect x="5.2" y="3" width="1" height="3" fill="#151515"/><rect x="7.8" y="3" width="1" height="3" fill="#151515"/></svg>
<div class="a" style="left:331px;top:706px;width:13px;height:13px;background:#161616"></div>
<svg class="a" style="left:345px;top:706px" width="14" height="13"><rect width="14" height="13" fill="#161616"/><path d="M2.5 11.5 L11.5 1.5" stroke="#d0d0d0" stroke-width="1.4"/></svg>
<div class="a" style="left:391px;top:706px;width:13px;height:13px;background:#161616"></div>
<div class="a" style="left:406px;top:706px;width:13px;height:13px;background:#161616"></div>
<svg class="a" style="left:421px;top:706px" width="14" height="14" viewBox="0 0 14 14"><rect width="14" height="14" fill="#151515"/><path d="M7 1.5 L12.5 4.2 L12.5 10 L7 12.8 L1.5 10 L1.5 4.2 Z M1.5 4.2 L7 7 L12.5 4.2 M7 7 L7 12.8" fill="none" stroke="#c8c8c8" stroke-width="1.1" stroke-linejoin="round"/></svg>
<div class="a" style="left:464px;top:704px;width:331px;height:20px;background:linear-gradient(90deg,#151515 1px,#2a2a2a 1px,#2a2a2a 8px,#3a3a3a 8px)"></div>
<div class="a" style="left:472px;top:705px;width:316px;height:16px;background:linear-gradient(#d8d8ea,#a2a1c6 18%,#9e9dc2 60%,#9898bc);"></div>
<div class="a" style="left:1px;top:724px;width:463px;height:19px;background:#292929"></div>
<div class="a" style="left:1px;top:743px;width:463px;height:1px;background:#1b1b1b"></div>
<svg class="a" style="left:5px;top:727px" width="16" height="12" viewBox="0 0 16 12"><rect width="16" height="12" fill="#181818"/><path d="M1.5 6 Q8 -0.5 14.5 6 Q8 12.5 1.5 6Z" fill="#c8c8c8"/><circle cx="8" cy="6" r="2.6" fill="#2a2a2a"/><circle cx="8" cy="6" r="1.2" fill="#c8c8c8"/></svg>
<div class="a" style="left:36px;top:726px;width:13px;height:13px;background:#161616"></div>
<div class="a" style="left:51px;top:726px;width:13px;height:13px;background:#161616"></div>
<svg class="a" style="left:74px;top:729px" width="9" height="8"><path d="M0.5 0.5 L8 4 L0.5 7.5Z" fill="#c4c4c4"/></svg>
<div class="a" style="left:87px;top:725px;width:15px;height:16px;background:#b5b3dc"></div>
<div class="t" style="left:108px;top:729px;color:#9a9a9a;font-weight:bold;font-size:11px">7</div>
<svg class="a" style="left:137px;top:726px" width="17" height="15" viewBox="0 0 17 15"><rect x="0.5" y="0.5" width="16" height="14" fill="#f0f0f0"/><rect x="2" y="2" width="13" height="11" fill="#5f97b8"/><path d="M2 8 Q7 5 15 9 L15 13 L2 13Z" fill="#c8dce6"/><path d="M2 4 L15 4 L15 6 Q8 4 2 7Z" fill="#3f7aa0"/></svg>
<div class="t" style="left:160px;top:728px;color:#c8c8c8;font-weight:bold;font-size:12px">背景.jpg</div>
<svg class="a" style="left:315px;top:726px" width="14" height="13" viewBox="0 0 14 13"><rect width="14" height="13" fill="#151515"/><path d="M2 6 Q2 1.8 7 1.8 Q12 1.8 12 6 Z" fill="#d0d0d0"/><rect x="1" y="7" width="12" height="1.3" fill="#d0d0d0"/><rect x="6.3" y="6" width="1.4" height="4.5" fill="#d0d0d0"/><path d="M5 10 L9 10 L7 12Z" fill="#d0d0d0"/><rect x="5.2" y="3" width="1" height="3" fill="#151515"/><rect x="7.8" y="3" width="1" height="3" fill="#151515"/></svg>
<div class="a" style="left:331px;top:726px;width:13px;height:13px;background:#161616"></div>
<svg class="a" style="left:345px;top:726px" width="14" height="13"><rect width="14" height="13" fill="#161616"/><path d="M2.5 11.5 L11.5 1.5" stroke="#d0d0d0" stroke-width="1.4"/></svg>
<div class="a" style="left:391px;top:726px;width:13px;height:13px;background:#161616"></div>
<div class="a" style="left:406px;top:726px;width:13px;height:13px;background:#161616"></div>
<svg class="a" style="left:421px;top:726px" width="14" height="14" viewBox="0 0 14 14"><rect width="14" height="14" fill="#151515"/><path d="M7 1.5 L12.5 4.2 L12.5 10 L7 12.8 L1.5 10 L1.5 4.2 Z M1.5 4.2 L7 7 L12.5 4.2 M7 7 L7 12.8" fill="none" stroke="#c8c8c8" stroke-width="1.1" stroke-linejoin="round"/></svg>
<div class="a" style="left:464px;top:724px;width:331px;height:20px;background:linear-gradient(90deg,#151515 1px,#2a2a2a 1px,#2a2a2a 8px,#2a2624 8px)"></div>
<div class="a" style="left:472px;top:725px;width:316px;height:16px;background:#7b7a8f"></div>
<svg class="a" style="left:796px;top:605px" width="15" height="14" viewBox="0 0 15 14"><circle cx="6" cy="5.5" r="4.5" fill="#cfcfcf"/><path d="M1 13 L5 6 L9 13Z" fill="#555" stroke="#cfcfcf" stroke-width="1"/><rect x="7.5" y="4.5" width="6.5" height="6.5" fill="#1b1b1b" stroke="#cfcfcf" stroke-width="1.2"/><rect x="0" y="12.5" width="9" height="1.2" fill="#cfcfcf"/></svg>
<div class="a" style="left:1px;top:743px;width:463px;height:5px;background:#262626"></div>
<div class="a" style="left:465px;top:743px;width:330px;height:5px;background:#2e2e2e"></div>
<!-- playhead -->
<div class="a" style="left:472px;top:568px;width:1px;height:180px;background:#3fb8ec"></div>
<svg class="a" style="left:466px;top:566px" width="13" height="16"><path d="M0.5 0.5 L12.5 0.5 L12.5 8 L6.5 15 L0.5 8Z" fill="#3cb4e6"/><path d="M4 3 L4 6 M6.5 3 L6.5 6 M9 3 L9 6 M5 8 L8 8 M6.5 8 L6.5 12" stroke="#1a4a66" stroke-width="0.9"/></svg>
<!-- bottom bar -->
<div class="a" style="left:1px;top:748px;width:812px;height:20px;background:#1a1a1a"></div>
<div class="a" style="left:312px;top:748px;width:135px;height:20px;background:#242424"></div>
<div class="a" style="left:466px;top:748px;width:107px;height:20px;background:#222"></div>
<svg class="a" style="left:4px;top:750px" width="60" height="16" viewBox="4 750 60 16">
 <rect x="7.5" y="752.5" width="8" height="7" fill="none" stroke="#3fa6dc" stroke-width="1.2"/>
 <rect x="10.5" y="755.5" width="8" height="7" fill="#1a1a1a" stroke="#3fa6dc" stroke-width="1.2"/>
 <rect x="12.5" y="757.5" width="4" height="3" fill="#3fa6dc"/>
 <circle cx="29" cy="756.5" r="4" fill="none" stroke="#d0d0d0" stroke-width="1.2"/>
 <rect x="30.5" y="758.5" width="6" height="5" fill="#1a1a1a" stroke="#d0d0d0" stroke-width="1.2"/>
 <path d="M46 752 L46 764 M52 752 L52 764 M44 758 L46 755 L46 761Z M54 758 L52 755 L52 761Z" stroke="#d0d0d0" stroke-width="1.2" fill="#d0d0d0"/>
</svg>
<div class="t" style="left:345px;top:753px;color:#c8c8c8;font-size:11px">切换开关/模式</div>
<svg class="a" style="left:466px;top:749px" width="110" height="18" viewBox="466 749 110 18">
 <path d="M470 762 L475.5 757 L481 762Z" fill="#cfcfcf"/>
 <path d="M483 759 L545 759" stroke="#333" stroke-width="1"/>
 <path d="M491 756 L496.5 752 L502 756 L502 764 L491 764Z" fill="#8e8e8e"/>
 <path d="M550 762 L555.5 756 L558.5 759 L561.5 756 L567 762Z" fill="none" stroke="#cfcfcf" stroke-width="1.1"/>
 <path d="M552 762 L555.5 758 L559 762 L562 758 L565 762Z" fill="#cfcfcf"/>
</svg>
<div class="a" style="left:0;top:766px;width:1024px;height:1px;background:#0a0a0a"></div>
<div class="a" style="left:0;top:767px;width:1024px;height:1px;background:#b4b4b4"></div>
</body></html>
